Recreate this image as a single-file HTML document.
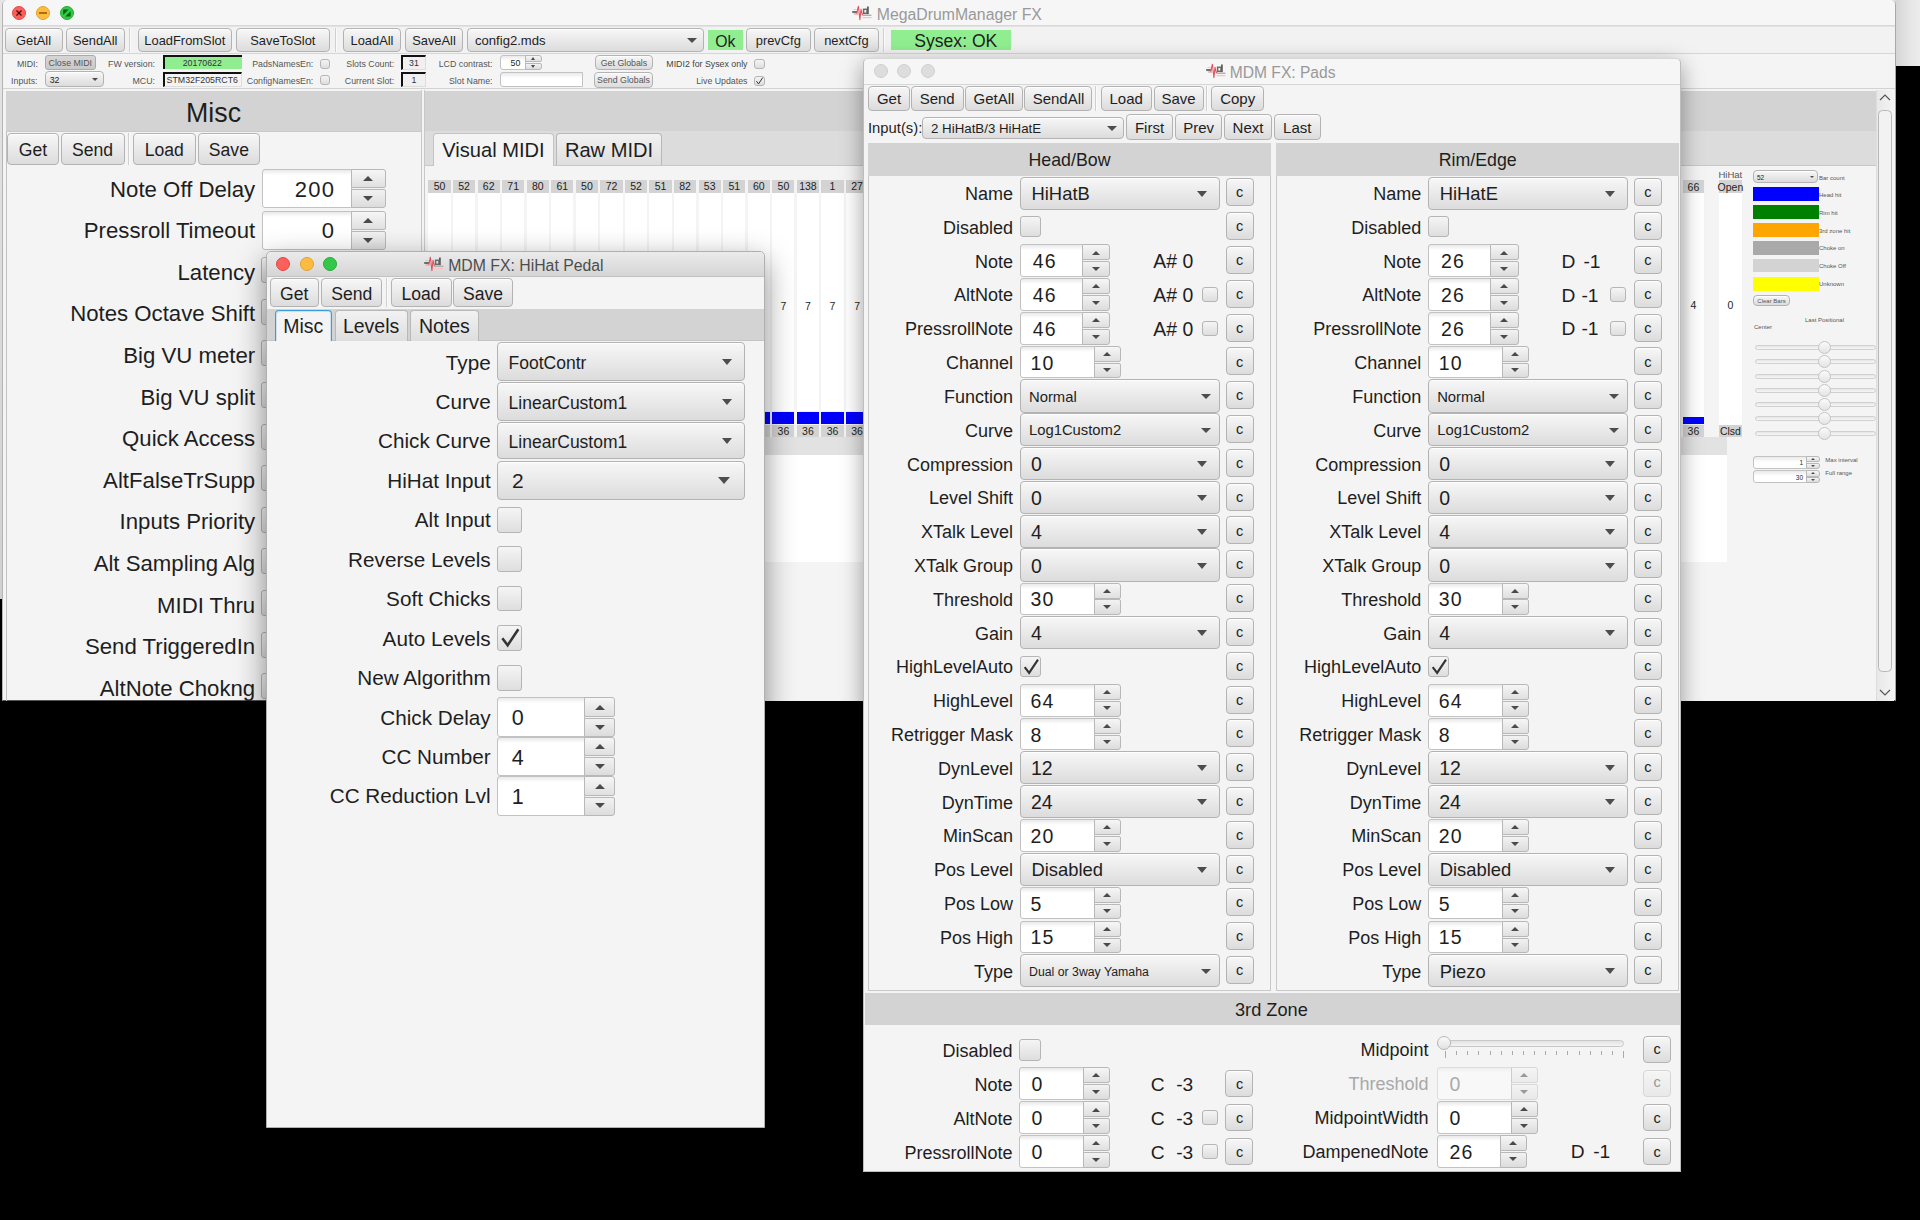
<!DOCTYPE html>
<html><head><meta charset="utf-8"><title>MegaDrumManager FX</title><style>*{box-sizing:border-box}
html,body{margin:0;padding:0}
body{width:1920px;height:1220px;background:#000;position:relative;overflow:hidden;font-family:"Liberation Sans",sans-serif;color:#1e1e1e}
body>div{position:absolute}
.t{white-space:nowrap;line-height:1}
.btn{border:1px solid #b3b3b3;border-radius:4px;background:linear-gradient(#f7f7f7,#dcdcdc);box-shadow:inset 0 1px 0 rgba(255,255,255,.85)}
.fld{border:1px solid #c2c2c2;border-radius:3px 0 0 3px;background:linear-gradient(#e9e9e9,#fff 5px)}
.sbu{border:1px solid #b8b8b8;border-radius:0 3px 2px 0;background:linear-gradient(#f6f6f6,#e0e0e0)}
.sbd{border:1px solid #b8b8b8;border-radius:0 2px 3px 0;background:linear-gradient(#f2f2f2,#dcdcdc)}
.chk{border:1px solid #b5b5b5;border-radius:3px;background:linear-gradient(#f5f5f5,#dedede)}
</style></head><body>
<div style="left:0.0px;top:0.0px;width:1920.0px;height:66.0px;background:#e9e9e9"></div>
<div style="left:1895.0px;top:0.0px;width:25.0px;height:66.0px;background:linear-gradient(90deg,#d4d4d4,#e6e6e6 60%,#ececec)"></div>
<div style="left:0.0px;top:0.0px;width:2.5px;height:599.0px;background:linear-gradient(#e6e6e6,#d0d0d0)"></div>
<div style="left:2.0px;top:0.0px;width:1894.0px;height:701.0px;background:#f4f4f4;border-radius:5px 5px 0 0;border-left:1px solid #b4b4b4;border-right:1px solid #a8a8a8;border-bottom:1px solid #555"></div>
<div style="left:3.0px;top:0.0px;width:1892.0px;height:26.0px;background:#f6f6f6;border-bottom:1px solid #d9d9d9;border-radius:5px 5px 0 0"></div>
<div style="left:12.0px;top:6.0px;width:14.0px;height:14.0px;border-radius:50%;background:#fc605c;border:0.8px solid #de4a46"></div>
<div style="left:36.0px;top:6.0px;width:14.0px;height:14.0px;border-radius:50%;background:#fdbc40;border:0.8px solid #dea236"></div>
<div style="left:60.0px;top:6.0px;width:14.0px;height:14.0px;border-radius:50%;background:#34c84a;border:0.8px solid #27aa35"></div>
<svg style="position:absolute;left:12px;top:6px" width="62" height="14" viewBox="0 0 62 14"><path d="M4.5 4.5 L9.5 9.5 M9.5 4.5 L4.5 9.5" stroke="#4d0000" stroke-width="1.3"/><path d="M27 7 L35 7" stroke="#995700" stroke-width="1.6"/><path d="M51.2 3.6 L56.6 3.6 L51.2 9 Z M58.6 5.2 L58.6 10.6 L53.2 10.6 Z" fill="#0b650d"/></svg>
<svg style="position:absolute;left:852.2px;top:4.8px" width="20.0" height="16.0" viewBox="0 0 20 16"><rect x="0" y="6.2" width="5.6" height="1.5" rx=".7" fill="#3a4a48"/><rect x="1.5" y="4.2" width="3" height=".6" fill="#bbb"/><rect x="1.8" y="8.4" width="4.5" height="1.2" fill="#e89a9a"/><path d="M4.6 8.6 L6.4 1.2 L7.9 14.6 L9 4.2 L10.3 9.8 L11 9" fill="none" stroke="#e0505a" stroke-width="1.05" stroke-linejoin="round"/><rect x="11.6" y="4.3" width="3.4" height="4" fill="none" stroke="#6a6a6a" stroke-width="1.5"/><rect x="15" y="1.5" width="1.8" height="7.6" fill="#5e5e5e"/><rect x="10.6" y="9.6" width="8.8" height="1.3" fill="#a8a8a8"/><rect x="10.6" y="12" width="8.8" height="1.2" fill="#f7c0c4"/></svg>
<div class="t" style="left:876.8px;top:7.0px;font-size:15.8px;color:#999999;">MegaDrumManager FX</div>
<div style="left:3.0px;top:26.0px;width:1892.0px;height:28.0px;background:#f2f2f2;border-bottom:1px solid #d6d6d6;border-top:1px solid #e2e2e2"></div>
<div class="btn" style="left:4.5px;top:28.0px;width:58.0px;height:24.0px;"></div>
<div class="t" style="left:-116.5px;width:300px;text-align:center;top:35.0px;font-size:12.9px;">GetAll</div>
<div class="btn" style="left:66.0px;top:28.0px;width:58.5px;height:24.0px;"></div>
<div class="t" style="left:-54.8px;width:300px;text-align:center;top:35.0px;font-size:12.9px;">SendAll</div>
<div style="left:129.0px;top:28px;width:2px;height:24px;border-left:1px solid #d0d0d0;border-right:1px solid #fafafa"></div>
<div class="btn" style="left:137.5px;top:28.0px;width:94.5px;height:24.0px;"></div>
<div class="t" style="left:34.8px;width:300px;text-align:center;top:35.0px;font-size:12.9px;">LoadFromSlot</div>
<div class="btn" style="left:235.5px;top:28.0px;width:94.5px;height:24.0px;"></div>
<div class="t" style="left:132.8px;width:300px;text-align:center;top:35.0px;font-size:12.9px;">SaveToSlot</div>
<div style="left:335.0px;top:28px;width:2px;height:24px;border-left:1px solid #d0d0d0;border-right:1px solid #fafafa"></div>
<div class="btn" style="left:343.0px;top:28.0px;width:58.0px;height:24.0px;"></div>
<div class="t" style="left:222.0px;width:300px;text-align:center;top:35.0px;font-size:12.9px;">LoadAll</div>
<div class="btn" style="left:405.0px;top:28.0px;width:58.0px;height:24.0px;"></div>
<div class="t" style="left:284.0px;width:300px;text-align:center;top:35.0px;font-size:12.9px;">SaveAll</div>
<div class="btn" style="left:467.0px;top:28.0px;width:237.0px;height:24.0px;"></div>
<div class="t" style="left:475.0px;top:34.0px;font-size:13.1px;">config2.mds</div>
<div style="left:687.0px;top:38.0px;width:0;height:0;border-left:5.0px solid transparent;border-right:5.0px solid transparent;border-top:5.0px solid #4d4d4d"></div>
<div style="left:707.5px;top:30.0px;width:35.5px;height:20.0px;background:#90ee90"></div>
<div class="t" style="left:695.3px;width:60px;text-align:center;top:34.0px;font-size:15.8px;">Ok</div>
<div class="btn" style="left:746.0px;top:28.0px;width:64.6px;height:24.0px;"></div>
<div class="t" style="left:628.3px;width:300px;text-align:center;top:35.0px;font-size:12.9px;">prevCfg</div>
<div class="btn" style="left:814.0px;top:28.0px;width:64.7px;height:24.0px;"></div>
<div class="t" style="left:696.4px;width:300px;text-align:center;top:35.0px;font-size:12.9px;">nextCfg</div>
<div style="left:883.0px;top:28px;width:2px;height:24px;border-left:1px solid #d0d0d0;border-right:1px solid #fafafa"></div>
<div style="left:891.0px;top:30.0px;width:119.6px;height:20.0px;background:#90ee90"></div>
<div class="t" style="left:855.8px;width:200px;text-align:center;top:33.0px;font-size:17.6px;">Sysex: OK</div>
<div style="left:3.0px;top:54.0px;width:1892.0px;height:35.0px;background:#f4f4f4;border-bottom:1px solid #d2d2d2"></div>
<div class="t" style="right:1882.0px;top:60.0px;font-size:8.8px;color:#555;">MIDI:</div>
<div style="left:44.7px;top:54.7px;width:51.3px;height:15.6px;border:1px solid #aaa;border-radius:3px;background:linear-gradient(#d6d6d6,#c9c9c9)"></div>
<div class="t" style="left:30.3px;width:80px;text-align:center;top:59.0px;font-size:8.8px;color:#555;">Close MIDI</div>
<div class="t" style="right:1882.5px;top:77.0px;font-size:8.8px;color:#555;">Inputs:</div>
<div class="btn" style="left:44.7px;top:71.0px;width:58.9px;height:16.2px;"></div>
<div class="t" style="left:49.7px;top:76.0px;font-size:8.8px;">32</div>
<div style="left:92.0px;top:77.8px;width:0;height:0;border-left:3.0px solid transparent;border-right:3.0px solid transparent;border-top:3.5px solid #4d4d4d"></div>
<div class="t" style="right:1765.0px;top:60.0px;font-size:8.8px;color:#555;">FW version:</div>
<div style="left:163.0px;top:55.4px;width:78.7px;height:13.6px;background:#90ee90;border-top:2px solid #111;border-left:2px solid #111"></div>
<div class="t" style="left:162.3px;width:80px;text-align:center;top:59.0px;font-size:8.8px;color:#333;">20170622</div>
<div class="t" style="right:1765.0px;top:77.0px;font-size:8.8px;color:#555;">MCU:</div>
<div style="left:163.0px;top:72.0px;width:78.7px;height:14.6px;background:#f4f4f4;border-top:2px solid #111;border-left:2px solid #111;border-bottom:1px solid #ddd;border-right:1px solid #ddd"></div>
<div class="t" style="left:162.3px;width:80px;text-align:center;top:76.0px;font-size:8.8px;color:#333;">STM32F205RCT6</div>
<div class="t" style="right:1606.7px;top:60.0px;font-size:8.8px;color:#555;">PadsNamesEn:</div>
<div class="chk" style="left:320.0px;top:59.0px;width:10.3px;height:9.7px;"></div>
<div class="t" style="right:1606.7px;top:77.0px;font-size:8.8px;color:#555;">ConfigNamesEn:</div>
<div class="chk" style="left:320.0px;top:75.3px;width:10.3px;height:10.0px;"></div>
<div class="t" style="right:1525.8px;top:60.0px;font-size:8.8px;color:#555;">Slots Count:</div>
<div style="left:401.3px;top:55.0px;width:24.5px;height:14.5px;background:#f0f0f0;border-top:2px solid #111;border-left:2px solid #111;border-bottom:1px solid #ddd;border-right:1px solid #ddd"></div>
<div class="t" style="left:399.0px;width:30px;text-align:center;top:59.0px;font-size:8.8px;color:#333;">31</div>
<div class="t" style="right:1525.8px;top:77.0px;font-size:8.8px;color:#555;">Current Slot:</div>
<div style="left:401.3px;top:72.0px;width:24.5px;height:14.7px;background:#f0f0f0;border-top:2px solid #111;border-left:2px solid #111;border-bottom:1px solid #ddd;border-right:1px solid #ddd"></div>
<div class="t" style="left:399.0px;width:30px;text-align:center;top:76.0px;font-size:8.8px;color:#333;">1</div>
<div class="t" style="right:1427.5px;top:60.0px;font-size:8.8px;color:#555;">LCD contrast:</div>
<div class="fld" style="left:499.5px;top:54.5px;width:26.8px;height:15.8px;"></div>
<div class="sbu" style="left:525.3px;top:54.5px;width:16.7px;height:7.7px;"></div>
<div class="sbd" style="left:525.3px;top:63.0px;width:16.7px;height:7.3px;"></div>
<div class="t" style="right:1399.7px;top:59.0px;font-size:8.8px;">50</div>
<div style="left:530.9px;top:57.2px;width:0;height:0;border-left:2.7px solid transparent;border-right:2.7px solid transparent;border-bottom:3.1px solid #4a4a4a"></div>
<div style="left:530.9px;top:65.1px;width:0;height:0;border-left:2.7px solid transparent;border-right:2.7px solid transparent;border-top:3.1px solid #4a4a4a"></div>
<div class="t" style="right:1427.5px;top:77.0px;font-size:8.8px;color:#555;">Slot Name:</div>
<div class="fld" style="left:499.5px;top:72.0px;width:83.5px;height:15.0px;"></div>
<div class="btn" style="left:594.7px;top:54.5px;width:58.6px;height:15.5px;"></div>
<div class="t" style="left:584.0px;width:80px;text-align:center;top:59.0px;font-size:8.8px;color:#555;">Get Globals</div>
<div class="btn" style="left:593.7px;top:71.7px;width:59.6px;height:16.1px;"></div>
<div class="t" style="left:583.5px;width:80px;text-align:center;top:76.0px;font-size:8.8px;color:#555;">Send Globals</div>
<div class="t" style="right:1172.5px;top:60.0px;font-size:8.8px;color:#444;">MIDI2 for Sysex only</div>
<div class="chk" style="left:754.0px;top:59.0px;width:10.7px;height:10.0px;"></div>
<div class="t" style="right:1172.5px;top:77.0px;font-size:8.8px;color:#555;">Live Updates</div>
<div class="chk" style="left:754.0px;top:75.5px;width:10.7px;height:10.0px;"></div>
<svg style="position:absolute;left:754.0px;top:75.5px" width="10.7" height="10.0" viewBox="0 0 24 24"><path d="M5 12.5 L10 19 L20 4" fill="none" stroke="#333" stroke-width="2.4" stroke-linejoin="miter"/></svg>
<div style="left:6.0px;top:91.0px;width:415.5px;height:40.0px;background:#d3d3d3"></div>
<div style="left:6.0px;top:131.0px;width:415.5px;height:570.0px;border-left:1px solid #c2c2c2;border-top:1px solid #cacaca"></div>
<div class="t" style="left:113.6px;width:200px;text-align:center;top:100.0px;font-size:26.8px;">Misc</div>
<div class="btn" style="left:7.0px;top:133.2px;width:51.8px;height:31.4px;"></div>
<div class="t" style="left:-117.1px;width:300px;text-align:center;top:142.0px;font-size:17.6px;">Get</div>
<div class="btn" style="left:60.5px;top:133.2px;width:64.2px;height:31.4px;"></div>
<div class="t" style="left:-57.4px;width:300px;text-align:center;top:142.0px;font-size:17.6px;">Send</div>
<div style="left:128.0px;top:133px;width:2px;height:32px;border-left:1px solid #d0d0d0;border-right:1px solid #fafafa"></div>
<div class="btn" style="left:133.0px;top:133.2px;width:62.7px;height:31.4px;"></div>
<div class="t" style="left:14.3px;width:300px;text-align:center;top:142.0px;font-size:17.6px;">Load</div>
<div class="btn" style="left:197.6px;top:133.2px;width:62.7px;height:31.4px;"></div>
<div class="t" style="left:78.9px;width:300px;text-align:center;top:142.0px;font-size:17.6px;">Save</div>
<div style="left:421px;top:90px;width:4px;height:611px;background:#f4f4f4;border-left:1px solid #c8c8c8;border-right:1px solid #c8c8c8"></div>
<div class="t" style="right:1664.8px;top:179.0px;font-size:22.2px;">Note Off Delay</div>
<div class="fld" style="left:262.0px;top:169.0px;width:90.3px;height:39.0px;"></div>
<div class="sbu" style="left:351.3px;top:169.0px;width:34.5px;height:19.3px;"></div>
<div class="sbd" style="left:351.3px;top:189.1px;width:34.5px;height:18.9px;"></div>
<div class="t" style="right:1584.7px;top:179.0px;font-size:22px;letter-spacing:1.32px;">200</div>
<div style="left:363.2px;top:176.4px;width:0;height:0;border-left:5.4px solid transparent;border-right:5.4px solid transparent;border-bottom:5.4px solid #4a4a4a"></div>
<div style="left:363.2px;top:195.9px;width:0;height:0;border-left:5.4px solid transparent;border-right:5.4px solid transparent;border-top:5.4px solid #4a4a4a"></div>
<div class="t" style="right:1664.8px;top:220.0px;font-size:22.2px;">Pressroll Timeout</div>
<div class="fld" style="left:262.0px;top:210.6px;width:90.3px;height:39.0px;"></div>
<div class="sbu" style="left:351.3px;top:210.6px;width:34.5px;height:19.3px;"></div>
<div class="sbd" style="left:351.3px;top:230.7px;width:34.5px;height:18.9px;"></div>
<div class="t" style="right:1584.7px;top:220.0px;font-size:22px;letter-spacing:1.32px;">0</div>
<div style="left:363.2px;top:218.0px;width:0;height:0;border-left:5.4px solid transparent;border-right:5.4px solid transparent;border-bottom:5.4px solid #4a4a4a"></div>
<div style="left:363.2px;top:237.5px;width:0;height:0;border-left:5.4px solid transparent;border-right:5.4px solid transparent;border-top:5.4px solid #4a4a4a"></div>
<div class="t" style="right:1664.8px;top:262.0px;font-size:22.2px;">Latency</div>
<div class="chk" style="left:261.3px;top:257.2px;width:25.7px;height:26.0px;"></div>
<div class="t" style="right:1664.8px;top:303.0px;font-size:22.2px;">Notes Octave Shift</div>
<div class="chk" style="left:261.3px;top:298.8px;width:25.7px;height:26.0px;"></div>
<div class="t" style="right:1664.8px;top:345.0px;font-size:22.2px;">Big VU meter</div>
<div class="chk" style="left:261.3px;top:340.4px;width:25.7px;height:26.0px;"></div>
<div class="t" style="right:1664.8px;top:387.0px;font-size:22.2px;">Big VU split</div>
<div class="chk" style="left:261.3px;top:382.0px;width:25.7px;height:26.0px;"></div>
<div class="t" style="right:1664.8px;top:428.0px;font-size:22.2px;">Quick Access</div>
<div class="chk" style="left:261.3px;top:423.6px;width:25.7px;height:26.0px;"></div>
<div class="t" style="right:1664.8px;top:470.0px;font-size:22.2px;">AltFalseTrSupp</div>
<div class="chk" style="left:261.3px;top:465.2px;width:25.7px;height:26.0px;"></div>
<div class="t" style="right:1664.8px;top:511.0px;font-size:22.2px;">Inputs Priority</div>
<div class="chk" style="left:261.3px;top:506.8px;width:25.7px;height:26.0px;"></div>
<div class="t" style="right:1664.8px;top:553.0px;font-size:22.2px;">Alt Sampling Alg</div>
<div class="chk" style="left:261.3px;top:548.4px;width:25.7px;height:26.0px;"></div>
<div class="t" style="right:1664.8px;top:595.0px;font-size:22.2px;">MIDI Thru</div>
<div class="chk" style="left:261.3px;top:590.0px;width:25.7px;height:26.0px;"></div>
<div class="t" style="right:1664.8px;top:636.0px;font-size:22.2px;">Send TriggeredIn</div>
<div class="chk" style="left:261.3px;top:631.6px;width:25.7px;height:26.0px;"></div>
<div class="t" style="right:1664.8px;top:678.0px;font-size:22.2px;">AltNote Chokng</div>
<div class="chk" style="left:261.3px;top:673.2px;width:25.7px;height:26.0px;"></div>
<div style="left:425.0px;top:91.0px;width:1451.0px;height:40.0px;background:#d3d3d3"></div>
<div style="left:425.0px;top:131.0px;width:1451.0px;height:35.0px;background:#dcdcdc"></div>
<div style="left:425.0px;top:165.0px;width:1451.0px;height:536.0px;background:#f4f4f4;border-top:1px solid #c8c8c8"></div>
<div style="left:432.5px;top:133.0px;width:121.5px;height:33.0px;background:#f4f4f4;border:1px solid #c4c4c4;border-bottom:none;border-radius:4px 4px 0 0"></div>
<div class="t" style="left:413.5px;width:160px;text-align:center;top:140.0px;font-size:20.1px;">Visual MIDI</div>
<div style="left:556.0px;top:133.0px;width:105.5px;height:32.0px;border-radius:4px 4px 0 0;border:1px solid #b8b8b8;border-bottom:none;background:linear-gradient(#f2f2f2,#dedede)"></div>
<div class="t" style="left:529.0px;width:160px;text-align:center;top:140.0px;font-size:20.1px;">Raw MIDI</div>
<div style="left:428.4px;top:180.4px;width:22.3px;height:12.4px;background:#d3d3d3"></div>
<div style="left:428.4px;top:192.8px;width:22.3px;height:218.7px;background:#fff"></div>
<div style="left:428.4px;top:411.5px;width:22.3px;height:12.8px;background:#0000ff"></div>
<div style="left:428.4px;top:424.5px;width:22.3px;height:12.5px;background:#d3d3d3"></div>
<div class="t" style="left:419.5px;width:40px;text-align:center;top:181.0px;font-size:10.5px;">50</div>
<div class="t" style="left:419.5px;width:40px;text-align:center;top:426.0px;font-size:10.5px;">36</div>
<div class="t" style="left:419.5px;width:40px;text-align:center;top:301.0px;font-size:10.5px;">7</div>
<div style="left:453.0px;top:180.4px;width:22.3px;height:12.4px;background:#d3d3d3"></div>
<div style="left:453.0px;top:192.8px;width:22.3px;height:218.7px;background:#fff"></div>
<div style="left:453.0px;top:411.5px;width:22.3px;height:12.8px;background:#0000ff"></div>
<div style="left:453.0px;top:424.5px;width:22.3px;height:12.5px;background:#d3d3d3"></div>
<div class="t" style="left:444.1px;width:40px;text-align:center;top:181.0px;font-size:10.5px;">52</div>
<div class="t" style="left:444.1px;width:40px;text-align:center;top:426.0px;font-size:10.5px;">36</div>
<div class="t" style="left:444.1px;width:40px;text-align:center;top:301.0px;font-size:10.5px;">7</div>
<div style="left:477.5px;top:180.4px;width:22.3px;height:12.4px;background:#d3d3d3"></div>
<div style="left:477.5px;top:192.8px;width:22.3px;height:218.7px;background:#fff"></div>
<div style="left:477.5px;top:411.5px;width:22.3px;height:12.8px;background:#0000ff"></div>
<div style="left:477.5px;top:424.5px;width:22.3px;height:12.5px;background:#d3d3d3"></div>
<div class="t" style="left:468.7px;width:40px;text-align:center;top:181.0px;font-size:10.5px;">62</div>
<div class="t" style="left:468.7px;width:40px;text-align:center;top:426.0px;font-size:10.5px;">36</div>
<div class="t" style="left:468.7px;width:40px;text-align:center;top:301.0px;font-size:10.5px;">7</div>
<div style="left:502.1px;top:180.4px;width:22.3px;height:12.4px;background:#d3d3d3"></div>
<div style="left:502.1px;top:192.8px;width:22.3px;height:218.7px;background:#fff"></div>
<div style="left:502.1px;top:411.5px;width:22.3px;height:12.8px;background:#0000ff"></div>
<div style="left:502.1px;top:424.5px;width:22.3px;height:12.5px;background:#d3d3d3"></div>
<div class="t" style="left:493.2px;width:40px;text-align:center;top:181.0px;font-size:10.5px;">71</div>
<div class="t" style="left:493.2px;width:40px;text-align:center;top:426.0px;font-size:10.5px;">36</div>
<div class="t" style="left:493.2px;width:40px;text-align:center;top:301.0px;font-size:10.5px;">7</div>
<div style="left:526.6px;top:180.4px;width:22.3px;height:12.4px;background:#d3d3d3"></div>
<div style="left:526.6px;top:192.8px;width:22.3px;height:218.7px;background:#fff"></div>
<div style="left:526.6px;top:411.5px;width:22.3px;height:12.8px;background:#0000ff"></div>
<div style="left:526.6px;top:424.5px;width:22.3px;height:12.5px;background:#d3d3d3"></div>
<div class="t" style="left:517.8px;width:40px;text-align:center;top:181.0px;font-size:10.5px;">80</div>
<div class="t" style="left:517.8px;width:40px;text-align:center;top:426.0px;font-size:10.5px;">36</div>
<div class="t" style="left:517.8px;width:40px;text-align:center;top:301.0px;font-size:10.5px;">7</div>
<div style="left:551.2px;top:180.4px;width:22.3px;height:12.4px;background:#d3d3d3"></div>
<div style="left:551.2px;top:192.8px;width:22.3px;height:218.7px;background:#fff"></div>
<div style="left:551.2px;top:411.5px;width:22.3px;height:12.8px;background:#0000ff"></div>
<div style="left:551.2px;top:424.5px;width:22.3px;height:12.5px;background:#d3d3d3"></div>
<div class="t" style="left:542.3px;width:40px;text-align:center;top:181.0px;font-size:10.5px;">61</div>
<div class="t" style="left:542.3px;width:40px;text-align:center;top:426.0px;font-size:10.5px;">36</div>
<div class="t" style="left:542.3px;width:40px;text-align:center;top:301.0px;font-size:10.5px;">7</div>
<div style="left:575.8px;top:180.4px;width:22.3px;height:12.4px;background:#d3d3d3"></div>
<div style="left:575.8px;top:192.8px;width:22.3px;height:218.7px;background:#fff"></div>
<div style="left:575.8px;top:411.5px;width:22.3px;height:12.8px;background:#0000ff"></div>
<div style="left:575.8px;top:424.5px;width:22.3px;height:12.5px;background:#d3d3d3"></div>
<div class="t" style="left:566.9px;width:40px;text-align:center;top:181.0px;font-size:10.5px;">50</div>
<div class="t" style="left:566.9px;width:40px;text-align:center;top:426.0px;font-size:10.5px;">36</div>
<div class="t" style="left:566.9px;width:40px;text-align:center;top:301.0px;font-size:10.5px;">7</div>
<div style="left:600.3px;top:180.4px;width:22.3px;height:12.4px;background:#d3d3d3"></div>
<div style="left:600.3px;top:192.8px;width:22.3px;height:218.7px;background:#fff"></div>
<div style="left:600.3px;top:411.5px;width:22.3px;height:12.8px;background:#0000ff"></div>
<div style="left:600.3px;top:424.5px;width:22.3px;height:12.5px;background:#d3d3d3"></div>
<div class="t" style="left:591.5px;width:40px;text-align:center;top:181.0px;font-size:10.5px;">72</div>
<div class="t" style="left:591.5px;width:40px;text-align:center;top:426.0px;font-size:10.5px;">36</div>
<div class="t" style="left:591.5px;width:40px;text-align:center;top:301.0px;font-size:10.5px;">7</div>
<div style="left:624.9px;top:180.4px;width:22.3px;height:12.4px;background:#d3d3d3"></div>
<div style="left:624.9px;top:192.8px;width:22.3px;height:218.7px;background:#fff"></div>
<div style="left:624.9px;top:411.5px;width:22.3px;height:12.8px;background:#0000ff"></div>
<div style="left:624.9px;top:424.5px;width:22.3px;height:12.5px;background:#d3d3d3"></div>
<div class="t" style="left:616.0px;width:40px;text-align:center;top:181.0px;font-size:10.5px;">52</div>
<div class="t" style="left:616.0px;width:40px;text-align:center;top:426.0px;font-size:10.5px;">36</div>
<div class="t" style="left:616.0px;width:40px;text-align:center;top:301.0px;font-size:10.5px;">7</div>
<div style="left:649.4px;top:180.4px;width:22.3px;height:12.4px;background:#d3d3d3"></div>
<div style="left:649.4px;top:192.8px;width:22.3px;height:218.7px;background:#fff"></div>
<div style="left:649.4px;top:411.5px;width:22.3px;height:12.8px;background:#0000ff"></div>
<div style="left:649.4px;top:424.5px;width:22.3px;height:12.5px;background:#d3d3d3"></div>
<div class="t" style="left:640.6px;width:40px;text-align:center;top:181.0px;font-size:10.5px;">51</div>
<div class="t" style="left:640.6px;width:40px;text-align:center;top:426.0px;font-size:10.5px;">36</div>
<div class="t" style="left:640.6px;width:40px;text-align:center;top:301.0px;font-size:10.5px;">7</div>
<div style="left:674.0px;top:180.4px;width:22.3px;height:12.4px;background:#d3d3d3"></div>
<div style="left:674.0px;top:192.8px;width:22.3px;height:218.7px;background:#fff"></div>
<div style="left:674.0px;top:411.5px;width:22.3px;height:12.8px;background:#0000ff"></div>
<div style="left:674.0px;top:424.5px;width:22.3px;height:12.5px;background:#d3d3d3"></div>
<div class="t" style="left:665.1px;width:40px;text-align:center;top:181.0px;font-size:10.5px;">82</div>
<div class="t" style="left:665.1px;width:40px;text-align:center;top:426.0px;font-size:10.5px;">36</div>
<div class="t" style="left:665.1px;width:40px;text-align:center;top:301.0px;font-size:10.5px;">7</div>
<div style="left:698.6px;top:180.4px;width:22.3px;height:12.4px;background:#d3d3d3"></div>
<div style="left:698.6px;top:192.8px;width:22.3px;height:218.7px;background:#fff"></div>
<div style="left:698.6px;top:411.5px;width:22.3px;height:12.8px;background:#0000ff"></div>
<div style="left:698.6px;top:424.5px;width:22.3px;height:12.5px;background:#d3d3d3"></div>
<div class="t" style="left:689.7px;width:40px;text-align:center;top:181.0px;font-size:10.5px;">53</div>
<div class="t" style="left:689.7px;width:40px;text-align:center;top:426.0px;font-size:10.5px;">36</div>
<div class="t" style="left:689.7px;width:40px;text-align:center;top:301.0px;font-size:10.5px;">7</div>
<div style="left:723.1px;top:180.4px;width:22.3px;height:12.4px;background:#d3d3d3"></div>
<div style="left:723.1px;top:192.8px;width:22.3px;height:218.7px;background:#fff"></div>
<div style="left:723.1px;top:411.5px;width:22.3px;height:12.8px;background:#0000ff"></div>
<div style="left:723.1px;top:424.5px;width:22.3px;height:12.5px;background:#d3d3d3"></div>
<div class="t" style="left:714.3px;width:40px;text-align:center;top:181.0px;font-size:10.5px;">51</div>
<div class="t" style="left:714.3px;width:40px;text-align:center;top:426.0px;font-size:10.5px;">36</div>
<div class="t" style="left:714.3px;width:40px;text-align:center;top:301.0px;font-size:10.5px;">7</div>
<div style="left:747.7px;top:180.4px;width:22.3px;height:12.4px;background:#d3d3d3"></div>
<div style="left:747.7px;top:192.8px;width:22.3px;height:218.7px;background:#fff"></div>
<div style="left:747.7px;top:411.5px;width:22.3px;height:12.8px;background:#0000ff"></div>
<div style="left:747.7px;top:424.5px;width:22.3px;height:12.5px;background:#d3d3d3"></div>
<div class="t" style="left:738.8px;width:40px;text-align:center;top:181.0px;font-size:10.5px;">60</div>
<div class="t" style="left:738.8px;width:40px;text-align:center;top:426.0px;font-size:10.5px;">36</div>
<div class="t" style="left:738.8px;width:40px;text-align:center;top:301.0px;font-size:10.5px;">7</div>
<div style="left:772.2px;top:180.4px;width:22.3px;height:12.4px;background:#d3d3d3"></div>
<div style="left:772.2px;top:192.8px;width:22.3px;height:218.7px;background:#fff"></div>
<div style="left:772.2px;top:411.5px;width:22.3px;height:12.8px;background:#0000ff"></div>
<div style="left:772.2px;top:424.5px;width:22.3px;height:12.5px;background:#d3d3d3"></div>
<div class="t" style="left:763.4px;width:40px;text-align:center;top:181.0px;font-size:10.5px;">50</div>
<div class="t" style="left:763.4px;width:40px;text-align:center;top:426.0px;font-size:10.5px;">36</div>
<div class="t" style="left:763.4px;width:40px;text-align:center;top:301.0px;font-size:10.5px;">7</div>
<div style="left:796.8px;top:180.4px;width:22.3px;height:12.4px;background:#d3d3d3"></div>
<div style="left:796.8px;top:192.8px;width:22.3px;height:218.7px;background:#fff"></div>
<div style="left:796.8px;top:411.5px;width:22.3px;height:12.8px;background:#0000ff"></div>
<div style="left:796.8px;top:424.5px;width:22.3px;height:12.5px;background:#d3d3d3"></div>
<div class="t" style="left:787.9px;width:40px;text-align:center;top:181.0px;font-size:10.5px;">138</div>
<div class="t" style="left:787.9px;width:40px;text-align:center;top:426.0px;font-size:10.5px;">36</div>
<div class="t" style="left:787.9px;width:40px;text-align:center;top:301.0px;font-size:10.5px;">7</div>
<div style="left:821.4px;top:180.4px;width:22.3px;height:12.4px;background:#d3d3d3"></div>
<div style="left:821.4px;top:192.8px;width:22.3px;height:218.7px;background:#fff"></div>
<div style="left:821.4px;top:411.5px;width:22.3px;height:12.8px;background:#0000ff"></div>
<div style="left:821.4px;top:424.5px;width:22.3px;height:12.5px;background:#d3d3d3"></div>
<div class="t" style="left:812.5px;width:40px;text-align:center;top:181.0px;font-size:10.5px;">1</div>
<div class="t" style="left:812.5px;width:40px;text-align:center;top:426.0px;font-size:10.5px;">36</div>
<div class="t" style="left:812.5px;width:40px;text-align:center;top:301.0px;font-size:10.5px;">7</div>
<div style="left:845.9px;top:180.4px;width:22.3px;height:12.4px;background:#d3d3d3"></div>
<div style="left:845.9px;top:192.8px;width:22.3px;height:218.7px;background:#fff"></div>
<div style="left:845.9px;top:411.5px;width:22.3px;height:12.8px;background:#0000ff"></div>
<div style="left:845.9px;top:424.5px;width:22.3px;height:12.5px;background:#d3d3d3"></div>
<div class="t" style="left:837.1px;width:40px;text-align:center;top:181.0px;font-size:10.5px;">27</div>
<div class="t" style="left:837.1px;width:40px;text-align:center;top:426.0px;font-size:10.5px;">36</div>
<div class="t" style="left:837.1px;width:40px;text-align:center;top:301.0px;font-size:10.5px;">7</div>
<div style="left:870.5px;top:180.4px;width:22.3px;height:12.4px;background:#d3d3d3"></div>
<div style="left:870.5px;top:192.8px;width:22.3px;height:218.7px;background:#fff"></div>
<div style="left:870.5px;top:411.5px;width:22.3px;height:12.8px;background:#0000ff"></div>
<div style="left:870.5px;top:424.5px;width:22.3px;height:12.5px;background:#d3d3d3"></div>
<div class="t" style="left:861.6px;width:40px;text-align:center;top:181.0px;font-size:10.5px;">0</div>
<div class="t" style="left:861.6px;width:40px;text-align:center;top:426.0px;font-size:10.5px;">36</div>
<div class="t" style="left:861.6px;width:40px;text-align:center;top:301.0px;font-size:10.5px;">7</div>
<div style="left:895.0px;top:180.4px;width:22.3px;height:12.4px;background:#d3d3d3"></div>
<div style="left:895.0px;top:192.8px;width:22.3px;height:218.7px;background:#fff"></div>
<div style="left:895.0px;top:411.5px;width:22.3px;height:12.8px;background:#0000ff"></div>
<div style="left:895.0px;top:424.5px;width:22.3px;height:12.5px;background:#d3d3d3"></div>
<div class="t" style="left:886.2px;width:40px;text-align:center;top:181.0px;font-size:10.5px;">0</div>
<div class="t" style="left:886.2px;width:40px;text-align:center;top:426.0px;font-size:10.5px;">36</div>
<div class="t" style="left:886.2px;width:40px;text-align:center;top:301.0px;font-size:10.5px;">7</div>
<div style="left:919.6px;top:180.4px;width:22.3px;height:12.4px;background:#d3d3d3"></div>
<div style="left:919.6px;top:192.8px;width:22.3px;height:218.7px;background:#fff"></div>
<div style="left:919.6px;top:411.5px;width:22.3px;height:12.8px;background:#0000ff"></div>
<div style="left:919.6px;top:424.5px;width:22.3px;height:12.5px;background:#d3d3d3"></div>
<div class="t" style="left:910.7px;width:40px;text-align:center;top:181.0px;font-size:10.5px;">0</div>
<div class="t" style="left:910.7px;width:40px;text-align:center;top:426.0px;font-size:10.5px;">36</div>
<div class="t" style="left:910.7px;width:40px;text-align:center;top:301.0px;font-size:10.5px;">7</div>
<div style="left:944.2px;top:180.4px;width:22.3px;height:12.4px;background:#d3d3d3"></div>
<div style="left:944.2px;top:192.8px;width:22.3px;height:218.7px;background:#fff"></div>
<div style="left:944.2px;top:411.5px;width:22.3px;height:12.8px;background:#0000ff"></div>
<div style="left:944.2px;top:424.5px;width:22.3px;height:12.5px;background:#d3d3d3"></div>
<div class="t" style="left:935.3px;width:40px;text-align:center;top:181.0px;font-size:10.5px;">0</div>
<div class="t" style="left:935.3px;width:40px;text-align:center;top:426.0px;font-size:10.5px;">36</div>
<div class="t" style="left:935.3px;width:40px;text-align:center;top:301.0px;font-size:10.5px;">7</div>
<div style="left:968.7px;top:180.4px;width:22.3px;height:12.4px;background:#d3d3d3"></div>
<div style="left:968.7px;top:192.8px;width:22.3px;height:218.7px;background:#fff"></div>
<div style="left:968.7px;top:411.5px;width:22.3px;height:12.8px;background:#0000ff"></div>
<div style="left:968.7px;top:424.5px;width:22.3px;height:12.5px;background:#d3d3d3"></div>
<div class="t" style="left:959.9px;width:40px;text-align:center;top:181.0px;font-size:10.5px;">0</div>
<div class="t" style="left:959.9px;width:40px;text-align:center;top:426.0px;font-size:10.5px;">36</div>
<div class="t" style="left:959.9px;width:40px;text-align:center;top:301.0px;font-size:10.5px;">7</div>
<div style="left:993.3px;top:180.4px;width:22.3px;height:12.4px;background:#d3d3d3"></div>
<div style="left:993.3px;top:192.8px;width:22.3px;height:218.7px;background:#fff"></div>
<div style="left:993.3px;top:411.5px;width:22.3px;height:12.8px;background:#0000ff"></div>
<div style="left:993.3px;top:424.5px;width:22.3px;height:12.5px;background:#d3d3d3"></div>
<div class="t" style="left:984.4px;width:40px;text-align:center;top:181.0px;font-size:10.5px;">0</div>
<div class="t" style="left:984.4px;width:40px;text-align:center;top:426.0px;font-size:10.5px;">36</div>
<div class="t" style="left:984.4px;width:40px;text-align:center;top:301.0px;font-size:10.5px;">7</div>
<div style="left:1017.8px;top:180.4px;width:22.3px;height:12.4px;background:#d3d3d3"></div>
<div style="left:1017.8px;top:192.8px;width:22.3px;height:218.7px;background:#fff"></div>
<div style="left:1017.8px;top:411.5px;width:22.3px;height:12.8px;background:#0000ff"></div>
<div style="left:1017.8px;top:424.5px;width:22.3px;height:12.5px;background:#d3d3d3"></div>
<div class="t" style="left:1009.0px;width:40px;text-align:center;top:181.0px;font-size:10.5px;">0</div>
<div class="t" style="left:1009.0px;width:40px;text-align:center;top:426.0px;font-size:10.5px;">36</div>
<div class="t" style="left:1009.0px;width:40px;text-align:center;top:301.0px;font-size:10.5px;">7</div>
<div style="left:1042.4px;top:180.4px;width:22.3px;height:12.4px;background:#d3d3d3"></div>
<div style="left:1042.4px;top:192.8px;width:22.3px;height:218.7px;background:#fff"></div>
<div style="left:1042.4px;top:411.5px;width:22.3px;height:12.8px;background:#0000ff"></div>
<div style="left:1042.4px;top:424.5px;width:22.3px;height:12.5px;background:#d3d3d3"></div>
<div class="t" style="left:1033.6px;width:40px;text-align:center;top:181.0px;font-size:10.5px;">0</div>
<div class="t" style="left:1033.6px;width:40px;text-align:center;top:426.0px;font-size:10.5px;">36</div>
<div class="t" style="left:1033.6px;width:40px;text-align:center;top:301.0px;font-size:10.5px;">7</div>
<div style="left:1067.0px;top:180.4px;width:22.3px;height:12.4px;background:#d3d3d3"></div>
<div style="left:1067.0px;top:192.8px;width:22.3px;height:218.7px;background:#fff"></div>
<div style="left:1067.0px;top:411.5px;width:22.3px;height:12.8px;background:#0000ff"></div>
<div style="left:1067.0px;top:424.5px;width:22.3px;height:12.5px;background:#d3d3d3"></div>
<div class="t" style="left:1058.1px;width:40px;text-align:center;top:181.0px;font-size:10.5px;">0</div>
<div class="t" style="left:1058.1px;width:40px;text-align:center;top:426.0px;font-size:10.5px;">36</div>
<div class="t" style="left:1058.1px;width:40px;text-align:center;top:301.0px;font-size:10.5px;">7</div>
<div style="left:1091.5px;top:180.4px;width:22.3px;height:12.4px;background:#d3d3d3"></div>
<div style="left:1091.5px;top:192.8px;width:22.3px;height:218.7px;background:#fff"></div>
<div style="left:1091.5px;top:411.5px;width:22.3px;height:12.8px;background:#0000ff"></div>
<div style="left:1091.5px;top:424.5px;width:22.3px;height:12.5px;background:#d3d3d3"></div>
<div class="t" style="left:1082.7px;width:40px;text-align:center;top:181.0px;font-size:10.5px;">0</div>
<div class="t" style="left:1082.7px;width:40px;text-align:center;top:426.0px;font-size:10.5px;">36</div>
<div class="t" style="left:1082.7px;width:40px;text-align:center;top:301.0px;font-size:10.5px;">7</div>
<div style="left:1116.1px;top:180.4px;width:22.3px;height:12.4px;background:#d3d3d3"></div>
<div style="left:1116.1px;top:192.8px;width:22.3px;height:218.7px;background:#fff"></div>
<div style="left:1116.1px;top:411.5px;width:22.3px;height:12.8px;background:#0000ff"></div>
<div style="left:1116.1px;top:424.5px;width:22.3px;height:12.5px;background:#d3d3d3"></div>
<div class="t" style="left:1107.2px;width:40px;text-align:center;top:181.0px;font-size:10.5px;">0</div>
<div class="t" style="left:1107.2px;width:40px;text-align:center;top:426.0px;font-size:10.5px;">36</div>
<div class="t" style="left:1107.2px;width:40px;text-align:center;top:301.0px;font-size:10.5px;">7</div>
<div style="left:1140.6px;top:180.4px;width:22.3px;height:12.4px;background:#d3d3d3"></div>
<div style="left:1140.6px;top:192.8px;width:22.3px;height:218.7px;background:#fff"></div>
<div style="left:1140.6px;top:411.5px;width:22.3px;height:12.8px;background:#0000ff"></div>
<div style="left:1140.6px;top:424.5px;width:22.3px;height:12.5px;background:#d3d3d3"></div>
<div class="t" style="left:1131.8px;width:40px;text-align:center;top:181.0px;font-size:10.5px;">0</div>
<div class="t" style="left:1131.8px;width:40px;text-align:center;top:426.0px;font-size:10.5px;">36</div>
<div class="t" style="left:1131.8px;width:40px;text-align:center;top:301.0px;font-size:10.5px;">7</div>
<div style="left:1165.2px;top:180.4px;width:22.3px;height:12.4px;background:#d3d3d3"></div>
<div style="left:1165.2px;top:192.8px;width:22.3px;height:218.7px;background:#fff"></div>
<div style="left:1165.2px;top:411.5px;width:22.3px;height:12.8px;background:#0000ff"></div>
<div style="left:1165.2px;top:424.5px;width:22.3px;height:12.5px;background:#d3d3d3"></div>
<div class="t" style="left:1156.3px;width:40px;text-align:center;top:181.0px;font-size:10.5px;">0</div>
<div class="t" style="left:1156.3px;width:40px;text-align:center;top:426.0px;font-size:10.5px;">36</div>
<div class="t" style="left:1156.3px;width:40px;text-align:center;top:301.0px;font-size:10.5px;">7</div>
<div style="left:1189.8px;top:180.4px;width:22.3px;height:12.4px;background:#d3d3d3"></div>
<div style="left:1189.8px;top:192.8px;width:22.3px;height:218.7px;background:#fff"></div>
<div style="left:1189.8px;top:411.5px;width:22.3px;height:12.8px;background:#0000ff"></div>
<div style="left:1189.8px;top:424.5px;width:22.3px;height:12.5px;background:#d3d3d3"></div>
<div class="t" style="left:1180.9px;width:40px;text-align:center;top:181.0px;font-size:10.5px;">0</div>
<div class="t" style="left:1180.9px;width:40px;text-align:center;top:426.0px;font-size:10.5px;">36</div>
<div class="t" style="left:1180.9px;width:40px;text-align:center;top:301.0px;font-size:10.5px;">7</div>
<div style="left:1214.3px;top:180.4px;width:22.3px;height:12.4px;background:#d3d3d3"></div>
<div style="left:1214.3px;top:192.8px;width:22.3px;height:218.7px;background:#fff"></div>
<div style="left:1214.3px;top:411.5px;width:22.3px;height:12.8px;background:#0000ff"></div>
<div style="left:1214.3px;top:424.5px;width:22.3px;height:12.5px;background:#d3d3d3"></div>
<div class="t" style="left:1205.5px;width:40px;text-align:center;top:181.0px;font-size:10.5px;">0</div>
<div class="t" style="left:1205.5px;width:40px;text-align:center;top:426.0px;font-size:10.5px;">36</div>
<div class="t" style="left:1205.5px;width:40px;text-align:center;top:301.0px;font-size:10.5px;">7</div>
<div style="left:1238.9px;top:180.4px;width:22.3px;height:12.4px;background:#d3d3d3"></div>
<div style="left:1238.9px;top:192.8px;width:22.3px;height:218.7px;background:#fff"></div>
<div style="left:1238.9px;top:411.5px;width:22.3px;height:12.8px;background:#0000ff"></div>
<div style="left:1238.9px;top:424.5px;width:22.3px;height:12.5px;background:#d3d3d3"></div>
<div class="t" style="left:1230.0px;width:40px;text-align:center;top:181.0px;font-size:10.5px;">0</div>
<div class="t" style="left:1230.0px;width:40px;text-align:center;top:426.0px;font-size:10.5px;">36</div>
<div class="t" style="left:1230.0px;width:40px;text-align:center;top:301.0px;font-size:10.5px;">7</div>
<div style="left:1263.4px;top:180.4px;width:22.3px;height:12.4px;background:#d3d3d3"></div>
<div style="left:1263.4px;top:192.8px;width:22.3px;height:218.7px;background:#fff"></div>
<div style="left:1263.4px;top:411.5px;width:22.3px;height:12.8px;background:#0000ff"></div>
<div style="left:1263.4px;top:424.5px;width:22.3px;height:12.5px;background:#d3d3d3"></div>
<div class="t" style="left:1254.6px;width:40px;text-align:center;top:181.0px;font-size:10.5px;">0</div>
<div class="t" style="left:1254.6px;width:40px;text-align:center;top:426.0px;font-size:10.5px;">36</div>
<div class="t" style="left:1254.6px;width:40px;text-align:center;top:301.0px;font-size:10.5px;">7</div>
<div style="left:1288.0px;top:180.4px;width:22.3px;height:12.4px;background:#d3d3d3"></div>
<div style="left:1288.0px;top:192.8px;width:22.3px;height:218.7px;background:#fff"></div>
<div style="left:1288.0px;top:411.5px;width:22.3px;height:12.8px;background:#0000ff"></div>
<div style="left:1288.0px;top:424.5px;width:22.3px;height:12.5px;background:#d3d3d3"></div>
<div class="t" style="left:1279.2px;width:40px;text-align:center;top:181.0px;font-size:10.5px;">0</div>
<div class="t" style="left:1279.2px;width:40px;text-align:center;top:426.0px;font-size:10.5px;">36</div>
<div class="t" style="left:1279.2px;width:40px;text-align:center;top:301.0px;font-size:10.5px;">7</div>
<div style="left:1312.6px;top:180.4px;width:22.3px;height:12.4px;background:#d3d3d3"></div>
<div style="left:1312.6px;top:192.8px;width:22.3px;height:218.7px;background:#fff"></div>
<div style="left:1312.6px;top:411.5px;width:22.3px;height:12.8px;background:#0000ff"></div>
<div style="left:1312.6px;top:424.5px;width:22.3px;height:12.5px;background:#d3d3d3"></div>
<div class="t" style="left:1303.7px;width:40px;text-align:center;top:181.0px;font-size:10.5px;">0</div>
<div class="t" style="left:1303.7px;width:40px;text-align:center;top:426.0px;font-size:10.5px;">36</div>
<div class="t" style="left:1303.7px;width:40px;text-align:center;top:301.0px;font-size:10.5px;">7</div>
<div style="left:1337.1px;top:180.4px;width:22.3px;height:12.4px;background:#d3d3d3"></div>
<div style="left:1337.1px;top:192.8px;width:22.3px;height:218.7px;background:#fff"></div>
<div style="left:1337.1px;top:411.5px;width:22.3px;height:12.8px;background:#0000ff"></div>
<div style="left:1337.1px;top:424.5px;width:22.3px;height:12.5px;background:#d3d3d3"></div>
<div class="t" style="left:1328.3px;width:40px;text-align:center;top:181.0px;font-size:10.5px;">0</div>
<div class="t" style="left:1328.3px;width:40px;text-align:center;top:426.0px;font-size:10.5px;">36</div>
<div class="t" style="left:1328.3px;width:40px;text-align:center;top:301.0px;font-size:10.5px;">7</div>
<div style="left:1361.7px;top:180.4px;width:22.3px;height:12.4px;background:#d3d3d3"></div>
<div style="left:1361.7px;top:192.8px;width:22.3px;height:218.7px;background:#fff"></div>
<div style="left:1361.7px;top:411.5px;width:22.3px;height:12.8px;background:#0000ff"></div>
<div style="left:1361.7px;top:424.5px;width:22.3px;height:12.5px;background:#d3d3d3"></div>
<div class="t" style="left:1352.8px;width:40px;text-align:center;top:181.0px;font-size:10.5px;">0</div>
<div class="t" style="left:1352.8px;width:40px;text-align:center;top:426.0px;font-size:10.5px;">36</div>
<div class="t" style="left:1352.8px;width:40px;text-align:center;top:301.0px;font-size:10.5px;">7</div>
<div style="left:1386.2px;top:180.4px;width:22.3px;height:12.4px;background:#d3d3d3"></div>
<div style="left:1386.2px;top:192.8px;width:22.3px;height:218.7px;background:#fff"></div>
<div style="left:1386.2px;top:411.5px;width:22.3px;height:12.8px;background:#0000ff"></div>
<div style="left:1386.2px;top:424.5px;width:22.3px;height:12.5px;background:#d3d3d3"></div>
<div class="t" style="left:1377.4px;width:40px;text-align:center;top:181.0px;font-size:10.5px;">0</div>
<div class="t" style="left:1377.4px;width:40px;text-align:center;top:426.0px;font-size:10.5px;">36</div>
<div class="t" style="left:1377.4px;width:40px;text-align:center;top:301.0px;font-size:10.5px;">7</div>
<div style="left:1410.8px;top:180.4px;width:22.3px;height:12.4px;background:#d3d3d3"></div>
<div style="left:1410.8px;top:192.8px;width:22.3px;height:218.7px;background:#fff"></div>
<div style="left:1410.8px;top:411.5px;width:22.3px;height:12.8px;background:#0000ff"></div>
<div style="left:1410.8px;top:424.5px;width:22.3px;height:12.5px;background:#d3d3d3"></div>
<div class="t" style="left:1402.0px;width:40px;text-align:center;top:181.0px;font-size:10.5px;">0</div>
<div class="t" style="left:1402.0px;width:40px;text-align:center;top:426.0px;font-size:10.5px;">36</div>
<div class="t" style="left:1402.0px;width:40px;text-align:center;top:301.0px;font-size:10.5px;">7</div>
<div style="left:1435.4px;top:180.4px;width:22.3px;height:12.4px;background:#d3d3d3"></div>
<div style="left:1435.4px;top:192.8px;width:22.3px;height:218.7px;background:#fff"></div>
<div style="left:1435.4px;top:411.5px;width:22.3px;height:12.8px;background:#0000ff"></div>
<div style="left:1435.4px;top:424.5px;width:22.3px;height:12.5px;background:#d3d3d3"></div>
<div class="t" style="left:1426.5px;width:40px;text-align:center;top:181.0px;font-size:10.5px;">0</div>
<div class="t" style="left:1426.5px;width:40px;text-align:center;top:426.0px;font-size:10.5px;">36</div>
<div class="t" style="left:1426.5px;width:40px;text-align:center;top:301.0px;font-size:10.5px;">7</div>
<div style="left:1459.9px;top:180.4px;width:22.3px;height:12.4px;background:#d3d3d3"></div>
<div style="left:1459.9px;top:192.8px;width:22.3px;height:218.7px;background:#fff"></div>
<div style="left:1459.9px;top:411.5px;width:22.3px;height:12.8px;background:#0000ff"></div>
<div style="left:1459.9px;top:424.5px;width:22.3px;height:12.5px;background:#d3d3d3"></div>
<div class="t" style="left:1451.1px;width:40px;text-align:center;top:181.0px;font-size:10.5px;">0</div>
<div class="t" style="left:1451.1px;width:40px;text-align:center;top:426.0px;font-size:10.5px;">36</div>
<div class="t" style="left:1451.1px;width:40px;text-align:center;top:301.0px;font-size:10.5px;">7</div>
<div style="left:1484.5px;top:180.4px;width:22.3px;height:12.4px;background:#d3d3d3"></div>
<div style="left:1484.5px;top:192.8px;width:22.3px;height:218.7px;background:#fff"></div>
<div style="left:1484.5px;top:411.5px;width:22.3px;height:12.8px;background:#0000ff"></div>
<div style="left:1484.5px;top:424.5px;width:22.3px;height:12.5px;background:#d3d3d3"></div>
<div class="t" style="left:1475.6px;width:40px;text-align:center;top:181.0px;font-size:10.5px;">0</div>
<div class="t" style="left:1475.6px;width:40px;text-align:center;top:426.0px;font-size:10.5px;">36</div>
<div class="t" style="left:1475.6px;width:40px;text-align:center;top:301.0px;font-size:10.5px;">7</div>
<div style="left:1509.0px;top:180.4px;width:22.3px;height:12.4px;background:#d3d3d3"></div>
<div style="left:1509.0px;top:192.8px;width:22.3px;height:218.7px;background:#fff"></div>
<div style="left:1509.0px;top:411.5px;width:22.3px;height:12.8px;background:#0000ff"></div>
<div style="left:1509.0px;top:424.5px;width:22.3px;height:12.5px;background:#d3d3d3"></div>
<div class="t" style="left:1500.2px;width:40px;text-align:center;top:181.0px;font-size:10.5px;">0</div>
<div class="t" style="left:1500.2px;width:40px;text-align:center;top:426.0px;font-size:10.5px;">36</div>
<div class="t" style="left:1500.2px;width:40px;text-align:center;top:301.0px;font-size:10.5px;">7</div>
<div style="left:1533.6px;top:180.4px;width:22.3px;height:12.4px;background:#d3d3d3"></div>
<div style="left:1533.6px;top:192.8px;width:22.3px;height:218.7px;background:#fff"></div>
<div style="left:1533.6px;top:411.5px;width:22.3px;height:12.8px;background:#0000ff"></div>
<div style="left:1533.6px;top:424.5px;width:22.3px;height:12.5px;background:#d3d3d3"></div>
<div class="t" style="left:1524.8px;width:40px;text-align:center;top:181.0px;font-size:10.5px;">0</div>
<div class="t" style="left:1524.8px;width:40px;text-align:center;top:426.0px;font-size:10.5px;">36</div>
<div class="t" style="left:1524.8px;width:40px;text-align:center;top:301.0px;font-size:10.5px;">7</div>
<div style="left:1558.2px;top:180.4px;width:22.3px;height:12.4px;background:#d3d3d3"></div>
<div style="left:1558.2px;top:192.8px;width:22.3px;height:218.7px;background:#fff"></div>
<div style="left:1558.2px;top:411.5px;width:22.3px;height:12.8px;background:#0000ff"></div>
<div style="left:1558.2px;top:424.5px;width:22.3px;height:12.5px;background:#d3d3d3"></div>
<div class="t" style="left:1549.3px;width:40px;text-align:center;top:181.0px;font-size:10.5px;">0</div>
<div class="t" style="left:1549.3px;width:40px;text-align:center;top:426.0px;font-size:10.5px;">36</div>
<div class="t" style="left:1549.3px;width:40px;text-align:center;top:301.0px;font-size:10.5px;">7</div>
<div style="left:1582.7px;top:180.4px;width:22.3px;height:12.4px;background:#d3d3d3"></div>
<div style="left:1582.7px;top:192.8px;width:22.3px;height:218.7px;background:#fff"></div>
<div style="left:1582.7px;top:411.5px;width:22.3px;height:12.8px;background:#0000ff"></div>
<div style="left:1582.7px;top:424.5px;width:22.3px;height:12.5px;background:#d3d3d3"></div>
<div class="t" style="left:1573.9px;width:40px;text-align:center;top:181.0px;font-size:10.5px;">0</div>
<div class="t" style="left:1573.9px;width:40px;text-align:center;top:426.0px;font-size:10.5px;">36</div>
<div class="t" style="left:1573.9px;width:40px;text-align:center;top:301.0px;font-size:10.5px;">7</div>
<div style="left:1607.3px;top:180.4px;width:22.3px;height:12.4px;background:#d3d3d3"></div>
<div style="left:1607.3px;top:192.8px;width:22.3px;height:218.7px;background:#fff"></div>
<div style="left:1607.3px;top:411.5px;width:22.3px;height:12.8px;background:#0000ff"></div>
<div style="left:1607.3px;top:424.5px;width:22.3px;height:12.5px;background:#d3d3d3"></div>
<div class="t" style="left:1598.4px;width:40px;text-align:center;top:181.0px;font-size:10.5px;">0</div>
<div class="t" style="left:1598.4px;width:40px;text-align:center;top:426.0px;font-size:10.5px;">36</div>
<div class="t" style="left:1598.4px;width:40px;text-align:center;top:301.0px;font-size:10.5px;">7</div>
<div style="left:1631.8px;top:180.4px;width:22.3px;height:12.4px;background:#d3d3d3"></div>
<div style="left:1631.8px;top:192.8px;width:22.3px;height:218.7px;background:#fff"></div>
<div style="left:1631.8px;top:411.5px;width:22.3px;height:12.8px;background:#0000ff"></div>
<div style="left:1631.8px;top:424.5px;width:22.3px;height:12.5px;background:#d3d3d3"></div>
<div class="t" style="left:1623.0px;width:40px;text-align:center;top:181.0px;font-size:10.5px;">0</div>
<div class="t" style="left:1623.0px;width:40px;text-align:center;top:426.0px;font-size:10.5px;">36</div>
<div class="t" style="left:1623.0px;width:40px;text-align:center;top:301.0px;font-size:10.5px;">7</div>
<div style="left:1656.4px;top:180.4px;width:22.3px;height:12.4px;background:#d3d3d3"></div>
<div style="left:1656.4px;top:192.8px;width:22.3px;height:218.7px;background:#fff"></div>
<div style="left:1656.4px;top:411.5px;width:22.3px;height:12.8px;background:#0000ff"></div>
<div style="left:1656.4px;top:424.5px;width:22.3px;height:12.5px;background:#d3d3d3"></div>
<div class="t" style="left:1647.6px;width:40px;text-align:center;top:181.0px;font-size:10.5px;">0</div>
<div class="t" style="left:1647.6px;width:40px;text-align:center;top:426.0px;font-size:10.5px;">36</div>
<div class="t" style="left:1647.6px;width:40px;text-align:center;top:301.0px;font-size:10.5px;">7</div>
<div style="left:425.0px;top:437.0px;width:1302.0px;height:18.0px;background:#e2e2e2"></div>
<div style="left:425.0px;top:455.0px;width:1302.0px;height:107.0px;background:#fff"></div>
<div style="left:425.0px;top:562.0px;width:1451.0px;height:139.0px;background:#f4f4f4"></div>
<div style="left:1682.5px;top:180.0px;width:21.8px;height:12.9px;background:#d3d3d3"></div>
<div class="t" style="left:1673.4px;width:40px;text-align:center;top:182.0px;font-size:10.5px;">66</div>
<div style="left:1682.5px;top:192.9px;width:21.8px;height:224.1px;background:linear-gradient(90deg,#f0f0f0,#fff 40%,#fff)"></div>
<div style="left:1682.5px;top:417.0px;width:21.8px;height:7.3px;background:#0000ff"></div>
<div style="left:1682.5px;top:424.5px;width:21.8px;height:12.9px;background:#d3d3d3"></div>
<div class="t" style="left:1673.4px;width:40px;text-align:center;top:426.0px;font-size:10.5px;">36</div>
<div class="t" style="left:1673.4px;width:40px;text-align:center;top:300.0px;font-size:10.5px;">4</div>
<div class="t" style="left:1710.4px;width:40px;text-align:center;top:170.0px;font-size:9.5px;color:#555;">HiHat</div>
<div style="left:1718.8px;top:180.0px;width:23.2px;height:13.0px;background:#d3d3d3"></div>
<div class="t" style="left:1710.4px;width:40px;text-align:center;top:182.0px;font-size:10.5px;">Open</div>
<div style="left:1718.8px;top:193.0px;width:23.2px;height:231.8px;background:#fff"></div>
<div style="left:1718.8px;top:424.8px;width:23.2px;height:12.6px;background:#d3d3d3"></div>
<div class="t" style="left:1710.4px;width:40px;text-align:center;top:426.0px;font-size:10.5px;">Clsd</div>
<div class="t" style="left:1710.4px;width:40px;text-align:center;top:300.0px;font-size:10.5px;">0</div>
<div class="btn" style="left:1753.0px;top:170.3px;width:65.3px;height:12.6px;"></div>
<div class="t" style="left:1757.0px;top:175.0px;font-size:6.5px;">52</div>
<div style="left:1810.0px;top:175.9px;width:0;height:0;border-left:2.0px solid transparent;border-right:2.0px solid transparent;border-top:2.5px solid #4d4d4d"></div>
<div class="t" style="left:1819.0px;top:175.0px;font-size:6px;color:#555;">Bar count</div>
<div style="left:1753.0px;top:187.3px;width:66.0px;height:13.8px;background:#0000ff"></div>
<div class="t" style="left:1819.0px;top:192.0px;font-size:6px;color:#555;">Head hit</div>
<div style="left:1753.0px;top:205.2px;width:66.0px;height:13.8px;background:#008000"></div>
<div class="t" style="left:1819.0px;top:210.0px;font-size:6px;color:#555;">Rim hit</div>
<div style="left:1753.0px;top:223.3px;width:66.0px;height:13.8px;background:#ffa500"></div>
<div class="t" style="left:1819.0px;top:228.0px;font-size:6px;color:#555;">3rd zone hit</div>
<div style="left:1753.0px;top:240.8px;width:66.0px;height:13.8px;background:#a9a9a9"></div>
<div class="t" style="left:1819.0px;top:245.0px;font-size:6px;color:#555;">Choke on</div>
<div style="left:1753.0px;top:258.7px;width:66.0px;height:13.8px;background:#d3d3d3"></div>
<div class="t" style="left:1819.0px;top:263.0px;font-size:6px;color:#555;">Choke Off</div>
<div style="left:1753.0px;top:277.0px;width:66.0px;height:13.8px;background:#ffff00"></div>
<div class="t" style="left:1819.0px;top:281.0px;font-size:6px;color:#555;">Unknown</div>
<div class="btn" style="left:1753.0px;top:294.7px;width:37.0px;height:11.1px;"></div>
<div class="t" style="left:1621.5px;width:300px;text-align:center;top:298.0px;font-size:6px;color:#555;">Clear Bars</div>
<div class="t" style="left:1805.0px;top:317.0px;font-size:6px;color:#555;">Last Positional</div>
<div class="t" style="left:1754.0px;top:324.0px;font-size:6px;color:#555;">Center</div>
<div style="left:1755.0px;top:344.8px;width:121.0px;height:5.0px;background:linear-gradient(#e6e6e6,#f6f6f6);border:1px solid #d0d0d0;border-radius:3px"></div>
<div style="left:1817.7px;top:340.8px;width:13px;height:13px;border-radius:50%;border:1px solid #c4c4c4;background:linear-gradient(#fafafa,#e4e4e4)"></div>
<div style="left:1755.0px;top:358.8px;width:121.0px;height:5.0px;background:linear-gradient(#e6e6e6,#f6f6f6);border:1px solid #d0d0d0;border-radius:3px"></div>
<div style="left:1817.7px;top:354.8px;width:13px;height:13px;border-radius:50%;border:1px solid #c4c4c4;background:linear-gradient(#fafafa,#e4e4e4)"></div>
<div style="left:1755.0px;top:373.5px;width:121.0px;height:5.0px;background:linear-gradient(#e6e6e6,#f6f6f6);border:1px solid #d0d0d0;border-radius:3px"></div>
<div style="left:1817.7px;top:369.5px;width:13px;height:13px;border-radius:50%;border:1px solid #c4c4c4;background:linear-gradient(#fafafa,#e4e4e4)"></div>
<div style="left:1755.0px;top:387.8px;width:121.0px;height:5.0px;background:linear-gradient(#e6e6e6,#f6f6f6);border:1px solid #d0d0d0;border-radius:3px"></div>
<div style="left:1817.7px;top:383.8px;width:13px;height:13px;border-radius:50%;border:1px solid #c4c4c4;background:linear-gradient(#fafafa,#e4e4e4)"></div>
<div style="left:1755.0px;top:402.0px;width:121.0px;height:5.0px;background:linear-gradient(#e6e6e6,#f6f6f6);border:1px solid #d0d0d0;border-radius:3px"></div>
<div style="left:1817.7px;top:398.0px;width:13px;height:13px;border-radius:50%;border:1px solid #c4c4c4;background:linear-gradient(#fafafa,#e4e4e4)"></div>
<div style="left:1755.0px;top:416.2px;width:121.0px;height:5.0px;background:linear-gradient(#e6e6e6,#f6f6f6);border:1px solid #d0d0d0;border-radius:3px"></div>
<div style="left:1817.7px;top:412.2px;width:13px;height:13px;border-radius:50%;border:1px solid #c4c4c4;background:linear-gradient(#fafafa,#e4e4e4)"></div>
<div style="left:1755.0px;top:430.7px;width:121.0px;height:5.0px;background:linear-gradient(#e6e6e6,#f6f6f6);border:1px solid #d0d0d0;border-radius:3px"></div>
<div style="left:1817.7px;top:426.7px;width:13px;height:13px;border-radius:50%;border:1px solid #c4c4c4;background:linear-gradient(#fafafa,#e4e4e4)"></div>
<div class="fld" style="left:1753.0px;top:455.5px;width:54.0px;height:13.4px;"></div>
<div class="sbu" style="left:1806.0px;top:455.5px;width:13.7px;height:6.5px;"></div>
<div class="sbd" style="left:1806.0px;top:462.8px;width:13.7px;height:6.1px;"></div>
<div class="t" style="right:117.0px;top:460.0px;font-size:6.5px;">1</div>
<div style="left:1810.6px;top:457.8px;width:0;height:0;border-left:2.2px solid transparent;border-right:2.2px solid transparent;border-bottom:2.7px solid #4a4a4a"></div>
<div style="left:1810.6px;top:464.5px;width:0;height:0;border-left:2.2px solid transparent;border-right:2.2px solid transparent;border-top:2.7px solid #4a4a4a"></div>
<div class="fld" style="left:1753.0px;top:470.0px;width:54.0px;height:13.4px;"></div>
<div class="sbu" style="left:1806.0px;top:470.0px;width:13.7px;height:6.5px;"></div>
<div class="sbd" style="left:1806.0px;top:477.3px;width:13.7px;height:6.1px;"></div>
<div class="t" style="right:117.0px;top:475.0px;font-size:6.5px;">30</div>
<div style="left:1810.6px;top:472.3px;width:0;height:0;border-left:2.2px solid transparent;border-right:2.2px solid transparent;border-bottom:2.7px solid #4a4a4a"></div>
<div style="left:1810.6px;top:479.0px;width:0;height:0;border-left:2.2px solid transparent;border-right:2.2px solid transparent;border-top:2.7px solid #4a4a4a"></div>
<div class="t" style="left:1825.3px;top:457.0px;font-size:6px;color:#555;">Max interval</div>
<div class="t" style="left:1825.3px;top:470.0px;font-size:6px;color:#555;">Full range</div>
<div style="left:1876.0px;top:90.0px;width:18.0px;height:611.0px;background:linear-gradient(90deg,#e8e8e8,#f4f4f4);border-left:1px solid #ddd"></div>
<svg style="position:absolute;left:1876px;top:90px" width="18" height="611" viewBox="0 0 18 611"><path d="M4 10 L9 5 L14 10" fill="none" stroke="#555" stroke-width="1.2"/><path d="M4 600 L9 605 L14 600" fill="none" stroke="#555" stroke-width="1.2"/><rect x="2.5" y="20.5" width="13" height="561" rx="4" fill="#f2f2f2" stroke="#b8b8b8"/></svg>
<div style="left:863.4px;top:58px;width:817.6px;height:1113.5px;background:#f4f4f4;border-radius:5px 5px 0 0;box-shadow:0 6px 22px rgba(0,0,0,.38);border:1px solid #bdbdbd;border-top-color:#d8d8d8"></div>
<div style="left:864.4px;top:59.0px;width:815.6px;height:25.8px;background:#f6f6f6;border-bottom:1px solid #d6d6d6;border-radius:5px 5px 0 0"></div>
<div style="left:873.6px;top:64.4px;width:14.0px;height:14.0px;border-radius:50%;background:#dddddd;border:0.8px solid #d0d0d0"></div>
<div style="left:897.4px;top:64.4px;width:14.0px;height:14.0px;border-radius:50%;background:#dddddd;border:0.8px solid #d0d0d0"></div>
<div style="left:921.4px;top:64.4px;width:14.0px;height:14.0px;border-radius:50%;background:#dddddd;border:0.8px solid #d0d0d0"></div>
<svg style="position:absolute;left:1205.8px;top:63.4px" width="20.0" height="16.0" viewBox="0 0 20 16"><rect x="0" y="6.2" width="5.6" height="1.5" rx=".7" fill="#3a4a48"/><rect x="1.5" y="4.2" width="3" height=".6" fill="#bbb"/><rect x="1.8" y="8.4" width="4.5" height="1.2" fill="#e89a9a"/><path d="M4.6 8.6 L6.4 1.2 L7.9 14.6 L9 4.2 L10.3 9.8 L11 9" fill="none" stroke="#e0505a" stroke-width="1.05" stroke-linejoin="round"/><rect x="11.6" y="4.3" width="3.4" height="4" fill="none" stroke="#6a6a6a" stroke-width="1.5"/><rect x="15" y="1.5" width="1.8" height="7.6" fill="#5e5e5e"/><rect x="10.6" y="9.6" width="8.8" height="1.3" fill="#a8a8a8"/><rect x="10.6" y="12" width="8.8" height="1.2" fill="#f7c0c4"/></svg>
<div class="t" style="left:1229.8px;top:65.0px;font-size:15.6px;color:#999999;">MDM FX: Pads</div>
<div class="btn" style="left:868.0px;top:85.7px;width:42.0px;height:25.7px;"></div>
<div class="t" style="left:739.0px;width:300px;text-align:center;top:91.0px;font-size:15.0px;">Get</div>
<div class="btn" style="left:911.0px;top:85.7px;width:52.5px;height:25.7px;"></div>
<div class="t" style="left:787.2px;width:300px;text-align:center;top:91.0px;font-size:15.0px;">Send</div>
<div class="btn" style="left:965.0px;top:85.7px;width:58.0px;height:25.7px;"></div>
<div class="t" style="left:844.0px;width:300px;text-align:center;top:91.0px;font-size:15.0px;">GetAll</div>
<div class="btn" style="left:1024.4px;top:85.7px;width:68.1px;height:25.7px;"></div>
<div class="t" style="left:908.5px;width:300px;text-align:center;top:91.0px;font-size:15.0px;">SendAll</div>
<div style="left:1095.0px;top:85.7px;width:2px;height:25.700000000000003px;border-left:1px solid #d0d0d0;border-right:1px solid #fafafa"></div>
<div class="btn" style="left:1100.6px;top:85.7px;width:51.3px;height:25.7px;"></div>
<div class="t" style="left:976.2px;width:300px;text-align:center;top:91.0px;font-size:15.0px;">Load</div>
<div class="btn" style="left:1153.5px;top:85.7px;width:50.0px;height:25.7px;"></div>
<div class="t" style="left:1028.5px;width:300px;text-align:center;top:91.0px;font-size:15.0px;">Save</div>
<div style="left:1206.0px;top:85.7px;width:2px;height:25.700000000000003px;border-left:1px solid #d0d0d0;border-right:1px solid #fafafa"></div>
<div class="btn" style="left:1211.0px;top:85.7px;width:53.4px;height:25.7px;"></div>
<div class="t" style="left:1087.7px;width:300px;text-align:center;top:91.0px;font-size:15.0px;">Copy</div>
<div class="t" style="left:868.0px;top:121.0px;font-size:14.8px;">Input(s):</div>
<div class="btn" style="left:921.6px;top:116.7px;width:202.4px;height:22.2px;"></div>
<div class="t" style="left:931.0px;top:122.0px;font-size:13.3px;">2 HiHatB/3 HiHatE</div>
<div style="left:1106.5px;top:125.8px;width:0;height:0;border-left:5.0px solid transparent;border-right:5.0px solid transparent;border-top:5.0px solid #4d4d4d"></div>
<div class="btn" style="left:1126.0px;top:114.0px;width:47.1px;height:26.2px;"></div>
<div class="t" style="left:999.5px;width:300px;text-align:center;top:120.0px;font-size:15.0px;">First</div>
<div class="btn" style="left:1175.0px;top:114.0px;width:47.2px;height:26.2px;"></div>
<div class="t" style="left:1048.6px;width:300px;text-align:center;top:120.0px;font-size:15.0px;">Prev</div>
<div class="btn" style="left:1223.7px;top:114.0px;width:48.5px;height:26.2px;"></div>
<div class="t" style="left:1098.0px;width:300px;text-align:center;top:120.0px;font-size:15.0px;">Next</div>
<div class="btn" style="left:1274.0px;top:114.0px;width:46.6px;height:26.2px;"></div>
<div class="t" style="left:1147.3px;width:300px;text-align:center;top:120.0px;font-size:15.0px;">Last</div>
<div style="left:868.0px;top:142.5px;width:403.0px;height:848px;border:1px solid #c9c9c9;background:#f4f4f4"></div>
<div style="left:868.0px;top:142.5px;width:403.0px;height:33.1px;background:#d3d3d3"></div>
<div class="t" style="left:969.5px;width:200px;text-align:center;top:152.0px;font-size:17.8px;">Head/Bow</div>
<div class="t" style="right:907.0px;top:185.0px;font-size:18.0px;">Name</div>
<div class="btn" style="left:1019.5px;top:176.5px;width:200.8px;height:33.2px;"></div>
<div class="t" style="left:1031.5px;top:185.0px;font-size:18.4px;">HiHatB</div>
<div style="left:1197.2px;top:190.6px;width:0;height:0;border-left:5.5px solid transparent;border-right:5.5px solid transparent;border-top:6.0px solid #4d4d4d"></div>
<div class="btn" style="left:1225.6px;top:178.3px;width:28.0px;height:28.0px;"></div>
<div class="t" style="left:1089.6px;width:300px;text-align:center;top:185.0px;font-size:14.5px;">c</div>
<div class="t" style="right:907.0px;top:219.0px;font-size:18.0px;">Disabled</div>
<div class="chk" style="left:1019.5px;top:216.2px;width:21.8px;height:21.3px;"></div>
<div class="btn" style="left:1225.6px;top:212.1px;width:28.0px;height:28.0px;"></div>
<div class="t" style="left:1089.6px;width:300px;text-align:center;top:219.0px;font-size:14.5px;">c</div>
<div class="t" style="right:907.0px;top:253.0px;font-size:18.0px;">Note</div>
<div class="fld" style="left:1019.5px;top:244.4px;width:63.7px;height:32.6px;"></div>
<div class="sbu" style="left:1082.2px;top:244.4px;width:28.3px;height:16.1px;"></div>
<div class="sbd" style="left:1082.2px;top:261.3px;width:28.3px;height:15.7px;"></div>
<div class="t" style="left:1032.7px;top:252.0px;font-size:19.5px;letter-spacing:1.17px;">46</div>
<div style="left:1091.8px;top:250.6px;width:0;height:0;border-left:4.5px solid transparent;border-right:4.5px solid transparent;border-bottom:4.5px solid #4a4a4a"></div>
<div style="left:1091.8px;top:266.9px;width:0;height:0;border-left:4.5px solid transparent;border-right:4.5px solid transparent;border-top:4.5px solid #4a4a4a"></div>
<div class="t" style="left:1153.3px;top:252.0px;font-size:19.4px;">A# 0</div>
<div class="btn" style="left:1225.6px;top:245.9px;width:28.0px;height:28.0px;"></div>
<div class="t" style="left:1089.6px;width:300px;text-align:center;top:253.0px;font-size:14.5px;">c</div>
<div class="t" style="right:907.0px;top:286.0px;font-size:18.0px;">AltNote</div>
<div class="fld" style="left:1019.5px;top:278.2px;width:63.7px;height:32.6px;"></div>
<div class="sbu" style="left:1082.2px;top:278.2px;width:28.3px;height:16.1px;"></div>
<div class="sbd" style="left:1082.2px;top:295.1px;width:28.3px;height:15.7px;"></div>
<div class="t" style="left:1032.7px;top:286.0px;font-size:19.5px;letter-spacing:1.17px;">46</div>
<div style="left:1091.8px;top:284.4px;width:0;height:0;border-left:4.5px solid transparent;border-right:4.5px solid transparent;border-bottom:4.5px solid #4a4a4a"></div>
<div style="left:1091.8px;top:300.7px;width:0;height:0;border-left:4.5px solid transparent;border-right:4.5px solid transparent;border-top:4.5px solid #4a4a4a"></div>
<div class="t" style="left:1153.3px;top:286.0px;font-size:19.4px;">A# 0</div>
<div class="chk" style="left:1202.0px;top:286.7px;width:15.6px;height:15.6px;"></div>
<div class="btn" style="left:1225.6px;top:279.7px;width:28.0px;height:28.0px;"></div>
<div class="t" style="left:1089.6px;width:300px;text-align:center;top:287.0px;font-size:14.5px;">c</div>
<div class="t" style="right:907.0px;top:320.0px;font-size:18.0px;">PressrollNote</div>
<div class="fld" style="left:1019.5px;top:312.0px;width:63.7px;height:32.6px;"></div>
<div class="sbu" style="left:1082.2px;top:312.0px;width:28.3px;height:16.1px;"></div>
<div class="sbd" style="left:1082.2px;top:328.9px;width:28.3px;height:15.7px;"></div>
<div class="t" style="left:1032.7px;top:320.0px;font-size:19.5px;letter-spacing:1.17px;">46</div>
<div style="left:1091.8px;top:318.2px;width:0;height:0;border-left:4.5px solid transparent;border-right:4.5px solid transparent;border-bottom:4.5px solid #4a4a4a"></div>
<div style="left:1091.8px;top:334.5px;width:0;height:0;border-left:4.5px solid transparent;border-right:4.5px solid transparent;border-top:4.5px solid #4a4a4a"></div>
<div class="t" style="left:1153.3px;top:320.0px;font-size:19.4px;">A# 0</div>
<div class="chk" style="left:1202.0px;top:320.5px;width:15.6px;height:15.6px;"></div>
<div class="btn" style="left:1225.6px;top:313.5px;width:28.0px;height:28.0px;"></div>
<div class="t" style="left:1089.6px;width:300px;text-align:center;top:321.0px;font-size:14.5px;">c</div>
<div class="t" style="right:907.0px;top:354.0px;font-size:18.0px;">Channel</div>
<div class="fld" style="left:1019.5px;top:345.8px;width:75.1px;height:32.6px;"></div>
<div class="sbu" style="left:1093.6px;top:345.8px;width:27.4px;height:16.1px;"></div>
<div class="sbd" style="left:1093.6px;top:362.8px;width:27.4px;height:15.7px;"></div>
<div class="t" style="left:1030.5px;top:354.0px;font-size:19.5px;letter-spacing:1.17px;">10</div>
<div style="left:1102.8px;top:352.1px;width:0;height:0;border-left:4.5px solid transparent;border-right:4.5px solid transparent;border-bottom:4.5px solid #4a4a4a"></div>
<div style="left:1102.8px;top:368.3px;width:0;height:0;border-left:4.5px solid transparent;border-right:4.5px solid transparent;border-top:4.5px solid #4a4a4a"></div>
<div class="btn" style="left:1225.6px;top:347.3px;width:28.0px;height:28.0px;"></div>
<div class="t" style="left:1089.6px;width:300px;text-align:center;top:355.0px;font-size:14.5px;">c</div>
<div class="t" style="right:907.0px;top:388.0px;font-size:18.0px;">Function</div>
<div class="btn" style="left:1019.5px;top:379.4px;width:200.8px;height:33.2px;"></div>
<div class="t" style="left:1029.0px;top:390.0px;font-size:14.8px;">Normal</div>
<div style="left:1200.5px;top:394.0px;width:0;height:0;border-left:5.0px solid transparent;border-right:5.0px solid transparent;border-top:5.0px solid #4d4d4d"></div>
<div class="btn" style="left:1225.6px;top:381.2px;width:28.0px;height:28.0px;"></div>
<div class="t" style="left:1089.6px;width:300px;text-align:center;top:388.0px;font-size:14.5px;">c</div>
<div class="t" style="right:907.0px;top:422.0px;font-size:18.0px;">Curve</div>
<div class="btn" style="left:1019.5px;top:413.2px;width:200.8px;height:33.2px;"></div>
<div class="t" style="left:1029.0px;top:423.0px;font-size:14.8px;">Log1Custom2</div>
<div style="left:1200.5px;top:427.8px;width:0;height:0;border-left:5.0px solid transparent;border-right:5.0px solid transparent;border-top:5.0px solid #4d4d4d"></div>
<div class="btn" style="left:1225.6px;top:415.0px;width:28.0px;height:28.0px;"></div>
<div class="t" style="left:1089.6px;width:300px;text-align:center;top:422.0px;font-size:14.5px;">c</div>
<div class="t" style="right:907.0px;top:456.0px;font-size:18.0px;">Compression</div>
<div class="btn" style="left:1019.5px;top:447.0px;width:200.8px;height:33.2px;"></div>
<div class="t" style="left:1031.0px;top:455.0px;font-size:19.5px;">0</div>
<div style="left:1197.2px;top:461.1px;width:0;height:0;border-left:5.5px solid transparent;border-right:5.5px solid transparent;border-top:6.0px solid #4d4d4d"></div>
<div class="btn" style="left:1225.6px;top:448.8px;width:28.0px;height:28.0px;"></div>
<div class="t" style="left:1089.6px;width:300px;text-align:center;top:456.0px;font-size:14.5px;">c</div>
<div class="t" style="right:907.0px;top:489.0px;font-size:18.0px;">Level Shift</div>
<div class="btn" style="left:1019.5px;top:480.8px;width:200.8px;height:33.2px;"></div>
<div class="t" style="left:1031.0px;top:489.0px;font-size:19.5px;">0</div>
<div style="left:1197.2px;top:494.9px;width:0;height:0;border-left:5.5px solid transparent;border-right:5.5px solid transparent;border-top:6.0px solid #4d4d4d"></div>
<div class="btn" style="left:1225.6px;top:482.6px;width:28.0px;height:28.0px;"></div>
<div class="t" style="left:1089.6px;width:300px;text-align:center;top:490.0px;font-size:14.5px;">c</div>
<div class="t" style="right:907.0px;top:523.0px;font-size:18.0px;">XTalk Level</div>
<div class="btn" style="left:1019.5px;top:514.6px;width:200.8px;height:33.2px;"></div>
<div class="t" style="left:1031.0px;top:523.0px;font-size:19.5px;">4</div>
<div style="left:1197.2px;top:528.7px;width:0;height:0;border-left:5.5px solid transparent;border-right:5.5px solid transparent;border-top:6.0px solid #4d4d4d"></div>
<div class="btn" style="left:1225.6px;top:516.4px;width:28.0px;height:28.0px;"></div>
<div class="t" style="left:1089.6px;width:300px;text-align:center;top:524.0px;font-size:14.5px;">c</div>
<div class="t" style="right:907.0px;top:557.0px;font-size:18.0px;">XTalk Group</div>
<div class="btn" style="left:1019.5px;top:548.4px;width:200.8px;height:33.2px;"></div>
<div class="t" style="left:1031.0px;top:557.0px;font-size:19.5px;">0</div>
<div style="left:1197.2px;top:562.5px;width:0;height:0;border-left:5.5px solid transparent;border-right:5.5px solid transparent;border-top:6.0px solid #4d4d4d"></div>
<div class="btn" style="left:1225.6px;top:550.2px;width:28.0px;height:28.0px;"></div>
<div class="t" style="left:1089.6px;width:300px;text-align:center;top:557.0px;font-size:14.5px;">c</div>
<div class="t" style="right:907.0px;top:591.0px;font-size:18.0px;">Threshold</div>
<div class="fld" style="left:1019.5px;top:582.5px;width:75.1px;height:32.6px;"></div>
<div class="sbu" style="left:1093.6px;top:582.5px;width:27.4px;height:16.1px;"></div>
<div class="sbd" style="left:1093.6px;top:599.4px;width:27.4px;height:15.7px;"></div>
<div class="t" style="left:1030.5px;top:590.0px;font-size:19.5px;letter-spacing:1.17px;">30</div>
<div style="left:1102.8px;top:588.7px;width:0;height:0;border-left:4.5px solid transparent;border-right:4.5px solid transparent;border-bottom:4.5px solid #4a4a4a"></div>
<div style="left:1102.8px;top:605.0px;width:0;height:0;border-left:4.5px solid transparent;border-right:4.5px solid transparent;border-top:4.5px solid #4a4a4a"></div>
<div class="btn" style="left:1225.6px;top:584.0px;width:28.0px;height:28.0px;"></div>
<div class="t" style="left:1089.6px;width:300px;text-align:center;top:591.0px;font-size:14.5px;">c</div>
<div class="t" style="right:907.0px;top:625.0px;font-size:18.0px;">Gain</div>
<div class="btn" style="left:1019.5px;top:616.0px;width:200.8px;height:33.2px;"></div>
<div class="t" style="left:1031.0px;top:624.0px;font-size:19.5px;">4</div>
<div style="left:1197.2px;top:630.1px;width:0;height:0;border-left:5.5px solid transparent;border-right:5.5px solid transparent;border-top:6.0px solid #4d4d4d"></div>
<div class="btn" style="left:1225.6px;top:617.8px;width:28.0px;height:28.0px;"></div>
<div class="t" style="left:1089.6px;width:300px;text-align:center;top:625.0px;font-size:14.5px;">c</div>
<div class="t" style="right:907.0px;top:658.0px;font-size:18.0px;">HighLevelAuto</div>
<div class="chk" style="left:1019.5px;top:655.7px;width:21.8px;height:21.3px;"></div>
<svg style="position:absolute;left:1019.5px;top:655.7px" width="21.8" height="21.3" viewBox="0 0 24 24"><path d="M5 12.5 L10 19 L20 4" fill="none" stroke="#333" stroke-width="2.4" stroke-linejoin="miter"/></svg>
<div class="btn" style="left:1225.6px;top:651.6px;width:28.0px;height:28.0px;"></div>
<div class="t" style="left:1089.6px;width:300px;text-align:center;top:659.0px;font-size:14.5px;">c</div>
<div class="t" style="right:907.0px;top:692.0px;font-size:18.0px;">HighLevel</div>
<div class="fld" style="left:1019.5px;top:684.0px;width:75.1px;height:32.6px;"></div>
<div class="sbu" style="left:1093.6px;top:684.0px;width:27.4px;height:16.1px;"></div>
<div class="sbd" style="left:1093.6px;top:700.9px;width:27.4px;height:15.7px;"></div>
<div class="t" style="left:1030.5px;top:692.0px;font-size:19.5px;letter-spacing:1.17px;">64</div>
<div style="left:1102.8px;top:690.1px;width:0;height:0;border-left:4.5px solid transparent;border-right:4.5px solid transparent;border-bottom:4.5px solid #4a4a4a"></div>
<div style="left:1102.8px;top:706.4px;width:0;height:0;border-left:4.5px solid transparent;border-right:4.5px solid transparent;border-top:4.5px solid #4a4a4a"></div>
<div class="btn" style="left:1225.6px;top:685.5px;width:28.0px;height:28.0px;"></div>
<div class="t" style="left:1089.6px;width:300px;text-align:center;top:693.0px;font-size:14.5px;">c</div>
<div class="t" style="right:907.0px;top:726.0px;font-size:18.0px;">Retrigger Mask</div>
<div class="fld" style="left:1019.5px;top:717.8px;width:75.1px;height:32.6px;"></div>
<div class="sbu" style="left:1093.6px;top:717.8px;width:27.4px;height:16.1px;"></div>
<div class="sbd" style="left:1093.6px;top:734.7px;width:27.4px;height:15.7px;"></div>
<div class="t" style="left:1030.5px;top:726.0px;font-size:19.5px;letter-spacing:1.17px;">8</div>
<div style="left:1102.8px;top:724.0px;width:0;height:0;border-left:4.5px solid transparent;border-right:4.5px solid transparent;border-bottom:4.5px solid #4a4a4a"></div>
<div style="left:1102.8px;top:740.3px;width:0;height:0;border-left:4.5px solid transparent;border-right:4.5px solid transparent;border-top:4.5px solid #4a4a4a"></div>
<div class="btn" style="left:1225.6px;top:719.3px;width:28.0px;height:28.0px;"></div>
<div class="t" style="left:1089.6px;width:300px;text-align:center;top:726.0px;font-size:14.5px;">c</div>
<div class="t" style="right:907.0px;top:760.0px;font-size:18.0px;">DynLevel</div>
<div class="btn" style="left:1019.5px;top:751.3px;width:200.8px;height:33.2px;"></div>
<div class="t" style="left:1031.0px;top:759.0px;font-size:19.5px;">12</div>
<div style="left:1197.2px;top:765.4px;width:0;height:0;border-left:5.5px solid transparent;border-right:5.5px solid transparent;border-top:6.0px solid #4d4d4d"></div>
<div class="btn" style="left:1225.6px;top:753.1px;width:28.0px;height:28.0px;"></div>
<div class="t" style="left:1089.6px;width:300px;text-align:center;top:760.0px;font-size:14.5px;">c</div>
<div class="t" style="right:907.0px;top:794.0px;font-size:18.0px;">DynTime</div>
<div class="btn" style="left:1019.5px;top:785.1px;width:200.8px;height:33.2px;"></div>
<div class="t" style="left:1031.0px;top:793.0px;font-size:19.5px;">24</div>
<div style="left:1197.2px;top:799.2px;width:0;height:0;border-left:5.5px solid transparent;border-right:5.5px solid transparent;border-top:6.0px solid #4d4d4d"></div>
<div class="btn" style="left:1225.6px;top:786.9px;width:28.0px;height:28.0px;"></div>
<div class="t" style="left:1089.6px;width:300px;text-align:center;top:794.0px;font-size:14.5px;">c</div>
<div class="t" style="right:907.0px;top:827.0px;font-size:18.0px;">MinScan</div>
<div class="fld" style="left:1019.5px;top:819.2px;width:75.1px;height:32.6px;"></div>
<div class="sbu" style="left:1093.6px;top:819.2px;width:27.4px;height:16.1px;"></div>
<div class="sbd" style="left:1093.6px;top:836.1px;width:27.4px;height:15.7px;"></div>
<div class="t" style="left:1030.5px;top:827.0px;font-size:19.5px;letter-spacing:1.17px;">20</div>
<div style="left:1102.8px;top:825.4px;width:0;height:0;border-left:4.5px solid transparent;border-right:4.5px solid transparent;border-bottom:4.5px solid #4a4a4a"></div>
<div style="left:1102.8px;top:841.7px;width:0;height:0;border-left:4.5px solid transparent;border-right:4.5px solid transparent;border-top:4.5px solid #4a4a4a"></div>
<div class="btn" style="left:1225.6px;top:820.7px;width:28.0px;height:28.0px;"></div>
<div class="t" style="left:1089.6px;width:300px;text-align:center;top:828.0px;font-size:14.5px;">c</div>
<div class="t" style="right:907.0px;top:861.0px;font-size:18.0px;">Pos Level</div>
<div class="btn" style="left:1019.5px;top:852.7px;width:200.8px;height:33.2px;"></div>
<div class="t" style="left:1031.5px;top:861.0px;font-size:18.4px;">Disabled</div>
<div style="left:1197.2px;top:866.8px;width:0;height:0;border-left:5.5px solid transparent;border-right:5.5px solid transparent;border-top:6.0px solid #4d4d4d"></div>
<div class="btn" style="left:1225.6px;top:854.5px;width:28.0px;height:28.0px;"></div>
<div class="t" style="left:1089.6px;width:300px;text-align:center;top:862.0px;font-size:14.5px;">c</div>
<div class="t" style="right:907.0px;top:895.0px;font-size:18.0px;">Pos Low</div>
<div class="fld" style="left:1019.5px;top:886.8px;width:75.1px;height:32.6px;"></div>
<div class="sbu" style="left:1093.6px;top:886.8px;width:27.4px;height:16.1px;"></div>
<div class="sbd" style="left:1093.6px;top:903.7px;width:27.4px;height:15.7px;"></div>
<div class="t" style="left:1030.5px;top:895.0px;font-size:19.5px;letter-spacing:1.17px;">5</div>
<div style="left:1102.8px;top:893.0px;width:0;height:0;border-left:4.5px solid transparent;border-right:4.5px solid transparent;border-bottom:4.5px solid #4a4a4a"></div>
<div style="left:1102.8px;top:909.3px;width:0;height:0;border-left:4.5px solid transparent;border-right:4.5px solid transparent;border-top:4.5px solid #4a4a4a"></div>
<div class="btn" style="left:1225.6px;top:888.3px;width:28.0px;height:28.0px;"></div>
<div class="t" style="left:1089.6px;width:300px;text-align:center;top:895.0px;font-size:14.5px;">c</div>
<div class="t" style="right:907.0px;top:929.0px;font-size:18.0px;">Pos High</div>
<div class="fld" style="left:1019.5px;top:920.6px;width:75.1px;height:32.6px;"></div>
<div class="sbu" style="left:1093.6px;top:920.6px;width:27.4px;height:16.1px;"></div>
<div class="sbd" style="left:1093.6px;top:937.5px;width:27.4px;height:15.7px;"></div>
<div class="t" style="left:1030.5px;top:928.0px;font-size:19.5px;letter-spacing:1.17px;">15</div>
<div style="left:1102.8px;top:926.8px;width:0;height:0;border-left:4.5px solid transparent;border-right:4.5px solid transparent;border-bottom:4.5px solid #4a4a4a"></div>
<div style="left:1102.8px;top:943.1px;width:0;height:0;border-left:4.5px solid transparent;border-right:4.5px solid transparent;border-top:4.5px solid #4a4a4a"></div>
<div class="btn" style="left:1225.6px;top:922.1px;width:28.0px;height:28.0px;"></div>
<div class="t" style="left:1089.6px;width:300px;text-align:center;top:929.0px;font-size:14.5px;">c</div>
<div class="t" style="right:907.0px;top:963.0px;font-size:18.0px;">Type</div>
<div class="btn" style="left:1019.5px;top:954.1px;width:200.8px;height:33.2px;"></div>
<div class="t" style="left:1029.0px;top:966.0px;font-size:12.3px;">Dual or 3way Yamaha</div>
<div style="left:1200.5px;top:968.7px;width:0;height:0;border-left:5.0px solid transparent;border-right:5.0px solid transparent;border-top:5.0px solid #4d4d4d"></div>
<div class="btn" style="left:1225.6px;top:955.9px;width:28.0px;height:28.0px;"></div>
<div class="t" style="left:1089.6px;width:300px;text-align:center;top:963.0px;font-size:14.5px;">c</div>
<div style="left:1276.2px;top:142.5px;width:403.0px;height:848px;border:1px solid #c9c9c9;background:#f4f4f4"></div>
<div style="left:1276.2px;top:142.5px;width:403.0px;height:33.1px;background:#d3d3d3"></div>
<div class="t" style="left:1377.7px;width:200px;text-align:center;top:152.0px;font-size:17.8px;">Rim/Edge</div>
<div class="t" style="right:498.8px;top:185.0px;font-size:18.0px;">Name</div>
<div class="btn" style="left:1427.7px;top:176.5px;width:200.8px;height:33.2px;"></div>
<div class="t" style="left:1439.7px;top:185.0px;font-size:18.4px;">HiHatE</div>
<div style="left:1605.4px;top:190.6px;width:0;height:0;border-left:5.5px solid transparent;border-right:5.5px solid transparent;border-top:6.0px solid #4d4d4d"></div>
<div class="btn" style="left:1633.8px;top:178.3px;width:28.0px;height:28.0px;"></div>
<div class="t" style="left:1497.8px;width:300px;text-align:center;top:185.0px;font-size:14.5px;">c</div>
<div class="t" style="right:498.8px;top:219.0px;font-size:18.0px;">Disabled</div>
<div class="chk" style="left:1427.7px;top:216.2px;width:21.8px;height:21.3px;"></div>
<div class="btn" style="left:1633.8px;top:212.1px;width:28.0px;height:28.0px;"></div>
<div class="t" style="left:1497.8px;width:300px;text-align:center;top:219.0px;font-size:14.5px;">c</div>
<div class="t" style="right:498.8px;top:253.0px;font-size:18.0px;">Note</div>
<div class="fld" style="left:1427.7px;top:244.4px;width:63.7px;height:32.6px;"></div>
<div class="sbu" style="left:1490.4px;top:244.4px;width:28.3px;height:16.1px;"></div>
<div class="sbd" style="left:1490.4px;top:261.3px;width:28.3px;height:15.7px;"></div>
<div class="t" style="left:1440.9px;top:252.0px;font-size:19.5px;letter-spacing:1.17px;">26</div>
<div style="left:1500.1px;top:250.6px;width:0;height:0;border-left:4.5px solid transparent;border-right:4.5px solid transparent;border-bottom:4.5px solid #4a4a4a"></div>
<div style="left:1500.1px;top:266.9px;width:0;height:0;border-left:4.5px solid transparent;border-right:4.5px solid transparent;border-top:4.5px solid #4a4a4a"></div>
<div class="t" style="left:1561.5px;top:252.0px;font-size:19.2px;">D</div>
<div class="t" style="right:319.5px;top:252.0px;font-size:19.2px;">-1</div>
<div class="btn" style="left:1633.8px;top:245.9px;width:28.0px;height:28.0px;"></div>
<div class="t" style="left:1497.8px;width:300px;text-align:center;top:253.0px;font-size:14.5px;">c</div>
<div class="t" style="right:498.8px;top:286.0px;font-size:18.0px;">AltNote</div>
<div class="fld" style="left:1427.7px;top:278.2px;width:63.7px;height:32.6px;"></div>
<div class="sbu" style="left:1490.4px;top:278.2px;width:28.3px;height:16.1px;"></div>
<div class="sbd" style="left:1490.4px;top:295.1px;width:28.3px;height:15.7px;"></div>
<div class="t" style="left:1440.9px;top:286.0px;font-size:19.5px;letter-spacing:1.17px;">26</div>
<div style="left:1500.1px;top:284.4px;width:0;height:0;border-left:4.5px solid transparent;border-right:4.5px solid transparent;border-bottom:4.5px solid #4a4a4a"></div>
<div style="left:1500.1px;top:300.7px;width:0;height:0;border-left:4.5px solid transparent;border-right:4.5px solid transparent;border-top:4.5px solid #4a4a4a"></div>
<div class="t" style="left:1561.5px;top:286.0px;font-size:19.2px;">D</div>
<div class="t" style="right:321.5px;top:286.0px;font-size:19.2px;">-1</div>
<div class="chk" style="left:1610.2px;top:286.7px;width:15.6px;height:15.6px;"></div>
<div class="btn" style="left:1633.8px;top:279.7px;width:28.0px;height:28.0px;"></div>
<div class="t" style="left:1497.8px;width:300px;text-align:center;top:287.0px;font-size:14.5px;">c</div>
<div class="t" style="right:498.8px;top:320.0px;font-size:18.0px;">PressrollNote</div>
<div class="fld" style="left:1427.7px;top:312.0px;width:63.7px;height:32.6px;"></div>
<div class="sbu" style="left:1490.4px;top:312.0px;width:28.3px;height:16.1px;"></div>
<div class="sbd" style="left:1490.4px;top:328.9px;width:28.3px;height:15.7px;"></div>
<div class="t" style="left:1440.9px;top:320.0px;font-size:19.5px;letter-spacing:1.17px;">26</div>
<div style="left:1500.1px;top:318.2px;width:0;height:0;border-left:4.5px solid transparent;border-right:4.5px solid transparent;border-bottom:4.5px solid #4a4a4a"></div>
<div style="left:1500.1px;top:334.5px;width:0;height:0;border-left:4.5px solid transparent;border-right:4.5px solid transparent;border-top:4.5px solid #4a4a4a"></div>
<div class="t" style="left:1561.5px;top:319.0px;font-size:19.2px;">D</div>
<div class="t" style="right:321.5px;top:319.0px;font-size:19.2px;">-1</div>
<div class="chk" style="left:1610.2px;top:320.5px;width:15.6px;height:15.6px;"></div>
<div class="btn" style="left:1633.8px;top:313.5px;width:28.0px;height:28.0px;"></div>
<div class="t" style="left:1497.8px;width:300px;text-align:center;top:321.0px;font-size:14.5px;">c</div>
<div class="t" style="right:498.8px;top:354.0px;font-size:18.0px;">Channel</div>
<div class="fld" style="left:1427.7px;top:345.8px;width:75.1px;height:32.6px;"></div>
<div class="sbu" style="left:1501.8px;top:345.8px;width:27.4px;height:16.1px;"></div>
<div class="sbd" style="left:1501.8px;top:362.8px;width:27.4px;height:15.7px;"></div>
<div class="t" style="left:1438.7px;top:354.0px;font-size:19.5px;letter-spacing:1.17px;">10</div>
<div style="left:1511.0px;top:352.1px;width:0;height:0;border-left:4.5px solid transparent;border-right:4.5px solid transparent;border-bottom:4.5px solid #4a4a4a"></div>
<div style="left:1511.0px;top:368.3px;width:0;height:0;border-left:4.5px solid transparent;border-right:4.5px solid transparent;border-top:4.5px solid #4a4a4a"></div>
<div class="btn" style="left:1633.8px;top:347.3px;width:28.0px;height:28.0px;"></div>
<div class="t" style="left:1497.8px;width:300px;text-align:center;top:355.0px;font-size:14.5px;">c</div>
<div class="t" style="right:498.8px;top:388.0px;font-size:18.0px;">Function</div>
<div class="btn" style="left:1427.7px;top:379.4px;width:200.8px;height:33.2px;"></div>
<div class="t" style="left:1437.2px;top:390.0px;font-size:14.8px;">Normal</div>
<div style="left:1608.7px;top:394.0px;width:0;height:0;border-left:5.0px solid transparent;border-right:5.0px solid transparent;border-top:5.0px solid #4d4d4d"></div>
<div class="btn" style="left:1633.8px;top:381.2px;width:28.0px;height:28.0px;"></div>
<div class="t" style="left:1497.8px;width:300px;text-align:center;top:388.0px;font-size:14.5px;">c</div>
<div class="t" style="right:498.8px;top:422.0px;font-size:18.0px;">Curve</div>
<div class="btn" style="left:1427.7px;top:413.2px;width:200.8px;height:33.2px;"></div>
<div class="t" style="left:1437.2px;top:423.0px;font-size:14.8px;">Log1Custom2</div>
<div style="left:1608.7px;top:427.8px;width:0;height:0;border-left:5.0px solid transparent;border-right:5.0px solid transparent;border-top:5.0px solid #4d4d4d"></div>
<div class="btn" style="left:1633.8px;top:415.0px;width:28.0px;height:28.0px;"></div>
<div class="t" style="left:1497.8px;width:300px;text-align:center;top:422.0px;font-size:14.5px;">c</div>
<div class="t" style="right:498.8px;top:456.0px;font-size:18.0px;">Compression</div>
<div class="btn" style="left:1427.7px;top:447.0px;width:200.8px;height:33.2px;"></div>
<div class="t" style="left:1439.2px;top:455.0px;font-size:19.5px;">0</div>
<div style="left:1605.4px;top:461.1px;width:0;height:0;border-left:5.5px solid transparent;border-right:5.5px solid transparent;border-top:6.0px solid #4d4d4d"></div>
<div class="btn" style="left:1633.8px;top:448.8px;width:28.0px;height:28.0px;"></div>
<div class="t" style="left:1497.8px;width:300px;text-align:center;top:456.0px;font-size:14.5px;">c</div>
<div class="t" style="right:498.8px;top:489.0px;font-size:18.0px;">Level Shift</div>
<div class="btn" style="left:1427.7px;top:480.8px;width:200.8px;height:33.2px;"></div>
<div class="t" style="left:1439.2px;top:489.0px;font-size:19.5px;">0</div>
<div style="left:1605.4px;top:494.9px;width:0;height:0;border-left:5.5px solid transparent;border-right:5.5px solid transparent;border-top:6.0px solid #4d4d4d"></div>
<div class="btn" style="left:1633.8px;top:482.6px;width:28.0px;height:28.0px;"></div>
<div class="t" style="left:1497.8px;width:300px;text-align:center;top:490.0px;font-size:14.5px;">c</div>
<div class="t" style="right:498.8px;top:523.0px;font-size:18.0px;">XTalk Level</div>
<div class="btn" style="left:1427.7px;top:514.6px;width:200.8px;height:33.2px;"></div>
<div class="t" style="left:1439.2px;top:523.0px;font-size:19.5px;">4</div>
<div style="left:1605.4px;top:528.7px;width:0;height:0;border-left:5.5px solid transparent;border-right:5.5px solid transparent;border-top:6.0px solid #4d4d4d"></div>
<div class="btn" style="left:1633.8px;top:516.4px;width:28.0px;height:28.0px;"></div>
<div class="t" style="left:1497.8px;width:300px;text-align:center;top:524.0px;font-size:14.5px;">c</div>
<div class="t" style="right:498.8px;top:557.0px;font-size:18.0px;">XTalk Group</div>
<div class="btn" style="left:1427.7px;top:548.4px;width:200.8px;height:33.2px;"></div>
<div class="t" style="left:1439.2px;top:557.0px;font-size:19.5px;">0</div>
<div style="left:1605.4px;top:562.5px;width:0;height:0;border-left:5.5px solid transparent;border-right:5.5px solid transparent;border-top:6.0px solid #4d4d4d"></div>
<div class="btn" style="left:1633.8px;top:550.2px;width:28.0px;height:28.0px;"></div>
<div class="t" style="left:1497.8px;width:300px;text-align:center;top:557.0px;font-size:14.5px;">c</div>
<div class="t" style="right:498.8px;top:591.0px;font-size:18.0px;">Threshold</div>
<div class="fld" style="left:1427.7px;top:582.5px;width:75.1px;height:32.6px;"></div>
<div class="sbu" style="left:1501.8px;top:582.5px;width:27.4px;height:16.1px;"></div>
<div class="sbd" style="left:1501.8px;top:599.4px;width:27.4px;height:15.7px;"></div>
<div class="t" style="left:1438.7px;top:590.0px;font-size:19.5px;letter-spacing:1.17px;">30</div>
<div style="left:1511.0px;top:588.7px;width:0;height:0;border-left:4.5px solid transparent;border-right:4.5px solid transparent;border-bottom:4.5px solid #4a4a4a"></div>
<div style="left:1511.0px;top:605.0px;width:0;height:0;border-left:4.5px solid transparent;border-right:4.5px solid transparent;border-top:4.5px solid #4a4a4a"></div>
<div class="btn" style="left:1633.8px;top:584.0px;width:28.0px;height:28.0px;"></div>
<div class="t" style="left:1497.8px;width:300px;text-align:center;top:591.0px;font-size:14.5px;">c</div>
<div class="t" style="right:498.8px;top:625.0px;font-size:18.0px;">Gain</div>
<div class="btn" style="left:1427.7px;top:616.0px;width:200.8px;height:33.2px;"></div>
<div class="t" style="left:1439.2px;top:624.0px;font-size:19.5px;">4</div>
<div style="left:1605.4px;top:630.1px;width:0;height:0;border-left:5.5px solid transparent;border-right:5.5px solid transparent;border-top:6.0px solid #4d4d4d"></div>
<div class="btn" style="left:1633.8px;top:617.8px;width:28.0px;height:28.0px;"></div>
<div class="t" style="left:1497.8px;width:300px;text-align:center;top:625.0px;font-size:14.5px;">c</div>
<div class="t" style="right:498.8px;top:658.0px;font-size:18.0px;">HighLevelAuto</div>
<div class="chk" style="left:1427.7px;top:655.7px;width:21.8px;height:21.3px;"></div>
<svg style="position:absolute;left:1427.7px;top:655.7px" width="21.8" height="21.3" viewBox="0 0 24 24"><path d="M5 12.5 L10 19 L20 4" fill="none" stroke="#333" stroke-width="2.4" stroke-linejoin="miter"/></svg>
<div class="btn" style="left:1633.8px;top:651.6px;width:28.0px;height:28.0px;"></div>
<div class="t" style="left:1497.8px;width:300px;text-align:center;top:659.0px;font-size:14.5px;">c</div>
<div class="t" style="right:498.8px;top:692.0px;font-size:18.0px;">HighLevel</div>
<div class="fld" style="left:1427.7px;top:684.0px;width:75.1px;height:32.6px;"></div>
<div class="sbu" style="left:1501.8px;top:684.0px;width:27.4px;height:16.1px;"></div>
<div class="sbd" style="left:1501.8px;top:700.9px;width:27.4px;height:15.7px;"></div>
<div class="t" style="left:1438.7px;top:692.0px;font-size:19.5px;letter-spacing:1.17px;">64</div>
<div style="left:1511.0px;top:690.1px;width:0;height:0;border-left:4.5px solid transparent;border-right:4.5px solid transparent;border-bottom:4.5px solid #4a4a4a"></div>
<div style="left:1511.0px;top:706.4px;width:0;height:0;border-left:4.5px solid transparent;border-right:4.5px solid transparent;border-top:4.5px solid #4a4a4a"></div>
<div class="btn" style="left:1633.8px;top:685.5px;width:28.0px;height:28.0px;"></div>
<div class="t" style="left:1497.8px;width:300px;text-align:center;top:693.0px;font-size:14.5px;">c</div>
<div class="t" style="right:498.8px;top:726.0px;font-size:18.0px;">Retrigger Mask</div>
<div class="fld" style="left:1427.7px;top:717.8px;width:75.1px;height:32.6px;"></div>
<div class="sbu" style="left:1501.8px;top:717.8px;width:27.4px;height:16.1px;"></div>
<div class="sbd" style="left:1501.8px;top:734.7px;width:27.4px;height:15.7px;"></div>
<div class="t" style="left:1438.7px;top:726.0px;font-size:19.5px;letter-spacing:1.17px;">8</div>
<div style="left:1511.0px;top:724.0px;width:0;height:0;border-left:4.5px solid transparent;border-right:4.5px solid transparent;border-bottom:4.5px solid #4a4a4a"></div>
<div style="left:1511.0px;top:740.3px;width:0;height:0;border-left:4.5px solid transparent;border-right:4.5px solid transparent;border-top:4.5px solid #4a4a4a"></div>
<div class="btn" style="left:1633.8px;top:719.3px;width:28.0px;height:28.0px;"></div>
<div class="t" style="left:1497.8px;width:300px;text-align:center;top:726.0px;font-size:14.5px;">c</div>
<div class="t" style="right:498.8px;top:760.0px;font-size:18.0px;">DynLevel</div>
<div class="btn" style="left:1427.7px;top:751.3px;width:200.8px;height:33.2px;"></div>
<div class="t" style="left:1439.2px;top:759.0px;font-size:19.5px;">12</div>
<div style="left:1605.4px;top:765.4px;width:0;height:0;border-left:5.5px solid transparent;border-right:5.5px solid transparent;border-top:6.0px solid #4d4d4d"></div>
<div class="btn" style="left:1633.8px;top:753.1px;width:28.0px;height:28.0px;"></div>
<div class="t" style="left:1497.8px;width:300px;text-align:center;top:760.0px;font-size:14.5px;">c</div>
<div class="t" style="right:498.8px;top:794.0px;font-size:18.0px;">DynTime</div>
<div class="btn" style="left:1427.7px;top:785.1px;width:200.8px;height:33.2px;"></div>
<div class="t" style="left:1439.2px;top:793.0px;font-size:19.5px;">24</div>
<div style="left:1605.4px;top:799.2px;width:0;height:0;border-left:5.5px solid transparent;border-right:5.5px solid transparent;border-top:6.0px solid #4d4d4d"></div>
<div class="btn" style="left:1633.8px;top:786.9px;width:28.0px;height:28.0px;"></div>
<div class="t" style="left:1497.8px;width:300px;text-align:center;top:794.0px;font-size:14.5px;">c</div>
<div class="t" style="right:498.8px;top:827.0px;font-size:18.0px;">MinScan</div>
<div class="fld" style="left:1427.7px;top:819.2px;width:75.1px;height:32.6px;"></div>
<div class="sbu" style="left:1501.8px;top:819.2px;width:27.4px;height:16.1px;"></div>
<div class="sbd" style="left:1501.8px;top:836.1px;width:27.4px;height:15.7px;"></div>
<div class="t" style="left:1438.7px;top:827.0px;font-size:19.5px;letter-spacing:1.17px;">20</div>
<div style="left:1511.0px;top:825.4px;width:0;height:0;border-left:4.5px solid transparent;border-right:4.5px solid transparent;border-bottom:4.5px solid #4a4a4a"></div>
<div style="left:1511.0px;top:841.7px;width:0;height:0;border-left:4.5px solid transparent;border-right:4.5px solid transparent;border-top:4.5px solid #4a4a4a"></div>
<div class="btn" style="left:1633.8px;top:820.7px;width:28.0px;height:28.0px;"></div>
<div class="t" style="left:1497.8px;width:300px;text-align:center;top:828.0px;font-size:14.5px;">c</div>
<div class="t" style="right:498.8px;top:861.0px;font-size:18.0px;">Pos Level</div>
<div class="btn" style="left:1427.7px;top:852.7px;width:200.8px;height:33.2px;"></div>
<div class="t" style="left:1439.7px;top:861.0px;font-size:18.4px;">Disabled</div>
<div style="left:1605.4px;top:866.8px;width:0;height:0;border-left:5.5px solid transparent;border-right:5.5px solid transparent;border-top:6.0px solid #4d4d4d"></div>
<div class="btn" style="left:1633.8px;top:854.5px;width:28.0px;height:28.0px;"></div>
<div class="t" style="left:1497.8px;width:300px;text-align:center;top:862.0px;font-size:14.5px;">c</div>
<div class="t" style="right:498.8px;top:895.0px;font-size:18.0px;">Pos Low</div>
<div class="fld" style="left:1427.7px;top:886.8px;width:75.1px;height:32.6px;"></div>
<div class="sbu" style="left:1501.8px;top:886.8px;width:27.4px;height:16.1px;"></div>
<div class="sbd" style="left:1501.8px;top:903.7px;width:27.4px;height:15.7px;"></div>
<div class="t" style="left:1438.7px;top:895.0px;font-size:19.5px;letter-spacing:1.17px;">5</div>
<div style="left:1511.0px;top:893.0px;width:0;height:0;border-left:4.5px solid transparent;border-right:4.5px solid transparent;border-bottom:4.5px solid #4a4a4a"></div>
<div style="left:1511.0px;top:909.3px;width:0;height:0;border-left:4.5px solid transparent;border-right:4.5px solid transparent;border-top:4.5px solid #4a4a4a"></div>
<div class="btn" style="left:1633.8px;top:888.3px;width:28.0px;height:28.0px;"></div>
<div class="t" style="left:1497.8px;width:300px;text-align:center;top:895.0px;font-size:14.5px;">c</div>
<div class="t" style="right:498.8px;top:929.0px;font-size:18.0px;">Pos High</div>
<div class="fld" style="left:1427.7px;top:920.6px;width:75.1px;height:32.6px;"></div>
<div class="sbu" style="left:1501.8px;top:920.6px;width:27.4px;height:16.1px;"></div>
<div class="sbd" style="left:1501.8px;top:937.5px;width:27.4px;height:15.7px;"></div>
<div class="t" style="left:1438.7px;top:928.0px;font-size:19.5px;letter-spacing:1.17px;">15</div>
<div style="left:1511.0px;top:926.8px;width:0;height:0;border-left:4.5px solid transparent;border-right:4.5px solid transparent;border-bottom:4.5px solid #4a4a4a"></div>
<div style="left:1511.0px;top:943.1px;width:0;height:0;border-left:4.5px solid transparent;border-right:4.5px solid transparent;border-top:4.5px solid #4a4a4a"></div>
<div class="btn" style="left:1633.8px;top:922.1px;width:28.0px;height:28.0px;"></div>
<div class="t" style="left:1497.8px;width:300px;text-align:center;top:929.0px;font-size:14.5px;">c</div>
<div class="t" style="right:498.8px;top:963.0px;font-size:18.0px;">Type</div>
<div class="btn" style="left:1427.7px;top:954.1px;width:200.8px;height:33.2px;"></div>
<div class="t" style="left:1439.7px;top:963.0px;font-size:18.4px;">Piezo</div>
<div style="left:1605.4px;top:968.2px;width:0;height:0;border-left:5.5px solid transparent;border-right:5.5px solid transparent;border-top:6.0px solid #4d4d4d"></div>
<div class="btn" style="left:1633.8px;top:955.9px;width:28.0px;height:28.0px;"></div>
<div class="t" style="left:1497.8px;width:300px;text-align:center;top:963.0px;font-size:14.5px;">c</div>
<div style="left:865.0px;top:992.5px;width:815.0px;height:32.9px;background:#d3d3d3"></div>
<div class="t" style="left:1171.4px;width:200px;text-align:center;top:1001.0px;font-size:18.2px;">3rd Zone</div>
<div class="t" style="right:907.4px;top:1042.0px;font-size:18.0px;">Disabled</div>
<div class="chk" style="left:1018.7px;top:1039.2px;width:22.3px;height:21.5px;"></div>
<div class="t" style="right:907.4px;top:1076.0px;font-size:18.0px;">Note</div>
<div class="fld" style="left:1019.0px;top:1067.2px;width:64.5px;height:32.8px;"></div>
<div class="sbu" style="left:1082.5px;top:1067.2px;width:27.2px;height:16.2px;"></div>
<div class="sbd" style="left:1082.5px;top:1084.2px;width:27.2px;height:15.8px;"></div>
<div class="t" style="left:1031.5px;top:1075.0px;font-size:19.5px;letter-spacing:1.17px;">0</div>
<div style="left:1091.6px;top:1073.4px;width:0;height:0;border-left:4.5px solid transparent;border-right:4.5px solid transparent;border-bottom:4.5px solid #4a4a4a"></div>
<div style="left:1091.6px;top:1089.8px;width:0;height:0;border-left:4.5px solid transparent;border-right:4.5px solid transparent;border-top:4.5px solid #4a4a4a"></div>
<div class="t" style="left:1150.7px;top:1075.0px;font-size:19.2px;">C</div>
<div class="t" style="right:726.8px;top:1075.0px;font-size:19.2px;">-3</div>
<div class="btn" style="left:1225.4px;top:1070.0px;width:28.1px;height:27.2px;"></div>
<div class="t" style="left:1089.5px;width:300px;text-align:center;top:1077.0px;font-size:14.5px;">c</div>
<div class="t" style="right:907.4px;top:1110.0px;font-size:18.0px;">AltNote</div>
<div class="fld" style="left:1019.0px;top:1101.3px;width:64.5px;height:32.8px;"></div>
<div class="sbu" style="left:1082.5px;top:1101.3px;width:27.2px;height:16.2px;"></div>
<div class="sbd" style="left:1082.5px;top:1118.3px;width:27.2px;height:15.8px;"></div>
<div class="t" style="left:1031.5px;top:1109.0px;font-size:19.5px;letter-spacing:1.17px;">0</div>
<div style="left:1091.6px;top:1107.5px;width:0;height:0;border-left:4.5px solid transparent;border-right:4.5px solid transparent;border-bottom:4.5px solid #4a4a4a"></div>
<div style="left:1091.6px;top:1124.0px;width:0;height:0;border-left:4.5px solid transparent;border-right:4.5px solid transparent;border-top:4.5px solid #4a4a4a"></div>
<div class="t" style="left:1150.7px;top:1109.0px;font-size:19.2px;">C</div>
<div class="t" style="right:726.8px;top:1109.0px;font-size:19.2px;">-3</div>
<div class="chk" style="left:1201.5px;top:1109.9px;width:16.5px;height:15.6px;"></div>
<div class="btn" style="left:1225.4px;top:1104.1px;width:28.1px;height:27.2px;"></div>
<div class="t" style="left:1089.5px;width:300px;text-align:center;top:1111.0px;font-size:14.5px;">c</div>
<div class="t" style="right:907.4px;top:1144.0px;font-size:18.0px;">PressrollNote</div>
<div class="fld" style="left:1019.0px;top:1135.2px;width:64.5px;height:32.8px;"></div>
<div class="sbu" style="left:1082.5px;top:1135.2px;width:27.2px;height:16.2px;"></div>
<div class="sbd" style="left:1082.5px;top:1152.2px;width:27.2px;height:15.8px;"></div>
<div class="t" style="left:1031.5px;top:1143.0px;font-size:19.5px;letter-spacing:1.17px;">0</div>
<div style="left:1091.6px;top:1141.4px;width:0;height:0;border-left:4.5px solid transparent;border-right:4.5px solid transparent;border-bottom:4.5px solid #4a4a4a"></div>
<div style="left:1091.6px;top:1157.8px;width:0;height:0;border-left:4.5px solid transparent;border-right:4.5px solid transparent;border-top:4.5px solid #4a4a4a"></div>
<div class="t" style="left:1150.7px;top:1143.0px;font-size:19.2px;">C</div>
<div class="t" style="right:726.8px;top:1143.0px;font-size:19.2px;">-3</div>
<div class="chk" style="left:1201.5px;top:1143.8px;width:16.5px;height:15.6px;"></div>
<div class="btn" style="left:1225.4px;top:1138.0px;width:28.1px;height:27.2px;"></div>
<div class="t" style="left:1089.5px;width:300px;text-align:center;top:1145.0px;font-size:14.5px;">c</div>
<div class="t" style="right:491.4px;top:1041.0px;font-size:18.0px;">Midpoint</div>
<div style="left:1437.4px;top:1040.0px;width:187.0px;height:6.5px;background:linear-gradient(#e2e2e2,#f4f4f4);border:1px solid #c8c8c8;border-radius:4px"></div>
<div style="left:1445.0px;top:1051.0px;width:1.0px;height:7.0px;background:#aaa"></div>
<div style="left:1456.1px;top:1051.0px;width:1.0px;height:4.0px;background:#aaa"></div>
<div style="left:1467.2px;top:1051.0px;width:1.0px;height:4.0px;background:#aaa"></div>
<div style="left:1478.4px;top:1051.0px;width:1.0px;height:4.0px;background:#aaa"></div>
<div style="left:1489.5px;top:1051.0px;width:1.0px;height:4.0px;background:#aaa"></div>
<div style="left:1500.6px;top:1051.0px;width:1.0px;height:4.0px;background:#aaa"></div>
<div style="left:1511.8px;top:1051.0px;width:1.0px;height:4.0px;background:#aaa"></div>
<div style="left:1522.9px;top:1051.0px;width:1.0px;height:4.0px;background:#aaa"></div>
<div style="left:1534.0px;top:1051.0px;width:1.0px;height:4.0px;background:#aaa"></div>
<div style="left:1545.1px;top:1051.0px;width:1.0px;height:4.0px;background:#aaa"></div>
<div style="left:1556.2px;top:1051.0px;width:1.0px;height:4.0px;background:#aaa"></div>
<div style="left:1567.4px;top:1051.0px;width:1.0px;height:4.0px;background:#aaa"></div>
<div style="left:1578.5px;top:1051.0px;width:1.0px;height:4.0px;background:#aaa"></div>
<div style="left:1589.6px;top:1051.0px;width:1.0px;height:4.0px;background:#aaa"></div>
<div style="left:1600.8px;top:1051.0px;width:1.0px;height:4.0px;background:#aaa"></div>
<div style="left:1611.9px;top:1051.0px;width:1.0px;height:4.0px;background:#aaa"></div>
<div style="left:1623.0px;top:1051.0px;width:1.0px;height:7.0px;background:#aaa"></div>
<div style="left:1437.4px;top:1036.2px;width:14px;height:14px;border-radius:50%;border:1px solid #b8b8b8;background:linear-gradient(#fafafa,#e2e2e2)"></div>
<div class="btn" style="left:1643.4px;top:1036.0px;width:27.4px;height:26.6px;"></div>
<div class="t" style="left:1507.1px;width:300px;text-align:center;top:1042.0px;font-size:14.5px;">c</div>
<div class="t" style="right:491.4px;top:1075.0px;font-size:18.0px;color:#a8a8a8;">Threshold</div>
<div class="fld" style="left:1437.4px;top:1067.0px;width:74.2px;height:32.8px;opacity:.45;"></div>
<div class="sbu" style="left:1510.6px;top:1067.0px;width:27.8px;height:16.2px;opacity:.45;"></div>
<div class="sbd" style="left:1510.6px;top:1084.0px;width:27.8px;height:15.8px;opacity:.45;"></div>
<div class="t" style="left:1449.4px;top:1075.0px;font-size:19.5px;color:#aaa;letter-spacing:1.17px;">0</div>
<div style="left:1520.0px;top:1073.2px;width:0;height:0;border-left:4.5px solid transparent;border-right:4.5px solid transparent;border-bottom:4.5px solid #999"></div>
<div style="left:1520.0px;top:1089.6px;width:0;height:0;border-left:4.5px solid transparent;border-right:4.5px solid transparent;border-top:4.5px solid #999"></div>
<div class="btn" style="left:1643.4px;top:1069.9px;width:27.4px;height:26.9px;opacity:.45"></div>
<div class="t" style="left:1642.1px;width:30px;text-align:center;top:1075.0px;font-size:14.5px;color:#999;">c</div>
<div class="t" style="right:491.4px;top:1109.0px;font-size:18.0px;">MidpointWidth</div>
<div class="fld" style="left:1437.4px;top:1101.1px;width:74.2px;height:32.9px;"></div>
<div class="sbu" style="left:1510.6px;top:1101.1px;width:27.8px;height:16.2px;"></div>
<div class="sbd" style="left:1510.6px;top:1118.1px;width:27.8px;height:15.9px;"></div>
<div class="t" style="left:1449.4px;top:1109.0px;font-size:19.5px;letter-spacing:1.17px;">0</div>
<div style="left:1520.0px;top:1107.4px;width:0;height:0;border-left:4.5px solid transparent;border-right:4.5px solid transparent;border-bottom:4.5px solid #4a4a4a"></div>
<div style="left:1520.0px;top:1123.8px;width:0;height:0;border-left:4.5px solid transparent;border-right:4.5px solid transparent;border-top:4.5px solid #4a4a4a"></div>
<div class="btn" style="left:1643.4px;top:1104.0px;width:27.4px;height:27.0px;"></div>
<div class="t" style="left:1507.1px;width:300px;text-align:center;top:1111.0px;font-size:14.5px;">c</div>
<div class="t" style="right:491.4px;top:1143.0px;font-size:18.0px;">DampenedNote</div>
<div class="fld" style="left:1437.4px;top:1134.8px;width:63.3px;height:32.8px;"></div>
<div class="sbu" style="left:1499.7px;top:1134.8px;width:27.8px;height:16.2px;"></div>
<div class="sbd" style="left:1499.7px;top:1151.8px;width:27.8px;height:15.8px;"></div>
<div class="t" style="left:1449.4px;top:1143.0px;font-size:19.5px;letter-spacing:1.17px;">26</div>
<div style="left:1509.1px;top:1141.0px;width:0;height:0;border-left:4.5px solid transparent;border-right:4.5px solid transparent;border-bottom:4.5px solid #4a4a4a"></div>
<div style="left:1509.1px;top:1157.4px;width:0;height:0;border-left:4.5px solid transparent;border-right:4.5px solid transparent;border-top:4.5px solid #4a4a4a"></div>
<div class="t" style="left:1570.8px;top:1142.0px;font-size:19.2px;">D</div>
<div class="t" style="right:309.8px;top:1142.0px;font-size:19.2px;">-1</div>
<div class="btn" style="left:1643.4px;top:1138.0px;width:27.4px;height:27.0px;"></div>
<div class="t" style="left:1507.1px;width:300px;text-align:center;top:1145.0px;font-size:14.5px;">c</div>
<div style="left:265.5px;top:250.8px;width:499.4px;height:877.4000000000001px;background:#f4f4f4;border-radius:5px 5px 0 0;box-shadow:0 10px 30px rgba(0,0,0,.45);border:1px solid #b0b0b0"></div>
<div style="left:266.5px;top:251.8px;width:497.4px;height:25.2px;background:linear-gradient(#ebebeb,#d5d5d5);border-bottom:1px solid #c2c2c2;border-radius:5px 5px 0 0"></div>
<div style="left:276.0px;top:256.8px;width:14.0px;height:14.0px;border-radius:50%;background:#fc605c;border:0.8px solid #de4a46"></div>
<div style="left:299.6px;top:256.8px;width:14.0px;height:14.0px;border-radius:50%;background:#fdbc40;border:0.8px solid #dea236"></div>
<div style="left:323.4px;top:256.8px;width:14.0px;height:14.0px;border-radius:50%;background:#34c84a;border:0.8px solid #27aa35"></div>
<svg style="position:absolute;left:423.9px;top:256.0px" width="20.0" height="16.0" viewBox="0 0 20 16"><rect x="0" y="6.2" width="5.6" height="1.5" rx=".7" fill="#3a4a48"/><rect x="1.5" y="4.2" width="3" height=".6" fill="#bbb"/><rect x="1.8" y="8.4" width="4.5" height="1.2" fill="#e89a9a"/><path d="M4.6 8.6 L6.4 1.2 L7.9 14.6 L9 4.2 L10.3 9.8 L11 9" fill="none" stroke="#e0505a" stroke-width="1.05" stroke-linejoin="round"/><rect x="11.6" y="4.3" width="3.4" height="4" fill="none" stroke="#6a6a6a" stroke-width="1.5"/><rect x="15" y="1.5" width="1.8" height="7.6" fill="#5e5e5e"/><rect x="10.6" y="9.6" width="8.8" height="1.3" fill="#a8a8a8"/><rect x="10.6" y="12" width="8.8" height="1.2" fill="#f7c0c4"/></svg>
<div class="t" style="left:448.2px;top:258.0px;font-size:15.8px;color:#4d4d4d;">MDM FX: HiHat Pedal</div>
<div class="btn" style="left:269.5px;top:277.9px;width:49.5px;height:29.3px;"></div>
<div class="t" style="left:144.2px;width:300px;text-align:center;top:286.0px;font-size:17.6px;">Get</div>
<div class="btn" style="left:321.0px;top:277.9px;width:61.4px;height:29.3px;"></div>
<div class="t" style="left:201.7px;width:300px;text-align:center;top:286.0px;font-size:17.6px;">Send</div>
<div style="left:385.5px;top:277.9px;width:2px;height:29.30000000000001px;border-left:1px solid #d0d0d0;border-right:1px solid #fafafa"></div>
<div class="btn" style="left:390.5px;top:277.9px;width:61.3px;height:29.3px;"></div>
<div class="t" style="left:271.1px;width:300px;text-align:center;top:286.0px;font-size:17.6px;">Load</div>
<div class="btn" style="left:452.8px;top:277.9px;width:60.4px;height:29.3px;"></div>
<div class="t" style="left:333.0px;width:300px;text-align:center;top:286.0px;font-size:17.6px;">Save</div>
<div style="left:266.5px;top:309.0px;width:497.4px;height:32.0px;background:#d3d3d3;border-bottom:1px solid #c4c4c4"></div>
<div style="left:274.9px;top:309.9px;width:56.9px;height:32.1px;background:#f4f4f4;border:1.5px solid #3d9bdc;border-bottom:none;border-radius:4px 4px 0 0;box-shadow:inset 1px 1px 0 #c9e3f4,inset -1px 0 0 #c9e3f4"></div>
<div class="t" style="left:253.3px;width:100px;text-align:center;top:317.0px;font-size:19.5px;">Misc</div>
<div style="left:334.5px;top:309.9px;width:73.1px;height:31.1px;border:1px solid #b8b8b8;border-bottom:none;border-radius:4px 4px 0 0;background:linear-gradient(#f2f2f2,#dedede)"></div>
<div class="t" style="left:321.1px;width:100px;text-align:center;top:317.0px;font-size:19.5px;">Levels</div>
<div style="left:409.5px;top:309.9px;width:69.9px;height:31.1px;border:1px solid #b8b8b8;border-bottom:none;border-radius:4px 4px 0 0;background:linear-gradient(#f2f2f2,#dedede)"></div>
<div class="t" style="left:394.4px;width:100px;text-align:center;top:317.0px;font-size:19.5px;">Notes</div>
<div style="left:266.5px;top:341.0px;width:497.4px;height:786.2px;background:#f4f4f4"></div>
<div class="t" style="right:1429.3px;top:353.0px;font-size:20.7px;">Type</div>
<div class="btn" style="left:497.0px;top:342.4px;width:248.4px;height:38.4px;"></div>
<div class="t" style="left:508.6px;top:355.0px;font-size:17.5px;">FootContr</div>
<div style="left:722.3px;top:359.1px;width:0;height:0;border-left:5.5px solid transparent;border-right:5.5px solid transparent;border-top:6.0px solid #4d4d4d"></div>
<div class="t" style="right:1429.3px;top:392.0px;font-size:20.7px;">Curve</div>
<div class="btn" style="left:497.0px;top:382.2px;width:248.4px;height:38.8px;"></div>
<div class="t" style="left:508.6px;top:395.0px;font-size:17.5px;">LinearCustom1</div>
<div style="left:722.3px;top:399.1px;width:0;height:0;border-left:5.5px solid transparent;border-right:5.5px solid transparent;border-top:6.0px solid #4d4d4d"></div>
<div class="t" style="right:1429.3px;top:431.0px;font-size:20.7px;">Chick Curve</div>
<div class="btn" style="left:497.0px;top:422.0px;width:248.4px;height:37.4px;"></div>
<div class="t" style="left:508.6px;top:434.0px;font-size:17.5px;">LinearCustom1</div>
<div style="left:722.3px;top:438.2px;width:0;height:0;border-left:5.5px solid transparent;border-right:5.5px solid transparent;border-top:6.0px solid #4d4d4d"></div>
<div class="t" style="right:1429.3px;top:471.0px;font-size:20.7px;">HiHat Input</div>
<div class="btn" style="left:497.0px;top:460.7px;width:248.4px;height:39.3px;"></div>
<div class="t" style="left:511.9px;top:470.0px;font-size:21px;">2</div>
<div style="left:717.5px;top:477.4px;width:0;height:0;border-left:6.5px solid transparent;border-right:6.5px solid transparent;border-top:7.0px solid #4d4d4d"></div>
<div class="t" style="right:1429.3px;top:510.0px;font-size:20.7px;">Alt Input</div>
<div class="chk" style="left:496.9px;top:507.0px;width:25.6px;height:25.6px;"></div>
<div class="t" style="right:1429.3px;top:550.0px;font-size:20.7px;">Reverse Levels</div>
<div class="chk" style="left:496.9px;top:546.4px;width:25.6px;height:25.6px;"></div>
<div class="t" style="right:1429.3px;top:589.0px;font-size:20.7px;">Soft Chicks</div>
<div class="chk" style="left:496.9px;top:585.8px;width:25.6px;height:25.6px;"></div>
<div class="t" style="right:1429.3px;top:629.0px;font-size:20.7px;">Auto Levels</div>
<div class="chk" style="left:496.9px;top:625.4px;width:25.6px;height:25.6px;"></div>
<svg style="position:absolute;left:496.9px;top:625.4px" width="25.6" height="25.6" viewBox="0 0 24 24"><path d="M5 12.5 L10 19 L20 4" fill="none" stroke="#333" stroke-width="2.4" stroke-linejoin="miter"/></svg>
<div class="t" style="right:1429.3px;top:668.0px;font-size:20.7px;">New Algorithm</div>
<div class="chk" style="left:496.9px;top:665.0px;width:25.6px;height:25.6px;"></div>
<div class="t" style="right:1429.3px;top:708.0px;font-size:20.7px;">Chick Delay</div>
<div class="fld" style="left:497.0px;top:697.3px;width:88.1px;height:39.6px;"></div>
<div class="sbu" style="left:584.1px;top:697.3px;width:31.3px;height:19.6px;"></div>
<div class="sbd" style="left:584.1px;top:717.7px;width:31.3px;height:19.2px;"></div>
<div class="t" style="left:511.7px;top:708.0px;font-size:21.5px;letter-spacing:1.29px;">0</div>
<div style="left:594.8px;top:704.8px;width:0;height:0;border-left:5.0px solid transparent;border-right:5.0px solid transparent;border-bottom:5.4px solid #4a4a4a"></div>
<div style="left:594.8px;top:724.6px;width:0;height:0;border-left:5.0px solid transparent;border-right:5.0px solid transparent;border-top:5.4px solid #4a4a4a"></div>
<div class="t" style="right:1429.3px;top:747.0px;font-size:20.7px;">CC Number</div>
<div class="fld" style="left:497.0px;top:736.9px;width:88.1px;height:39.1px;"></div>
<div class="sbu" style="left:584.1px;top:736.9px;width:31.3px;height:19.4px;"></div>
<div class="sbd" style="left:584.1px;top:757.1px;width:31.3px;height:18.9px;"></div>
<div class="t" style="left:511.7px;top:748.0px;font-size:21.5px;letter-spacing:1.29px;">4</div>
<div style="left:594.8px;top:744.3px;width:0;height:0;border-left:5.0px solid transparent;border-right:5.0px solid transparent;border-bottom:5.4px solid #4a4a4a"></div>
<div style="left:594.8px;top:763.8px;width:0;height:0;border-left:5.0px solid transparent;border-right:5.0px solid transparent;border-top:5.4px solid #4a4a4a"></div>
<div class="t" style="right:1429.3px;top:786.0px;font-size:20.7px;">CC Reduction Lvl</div>
<div class="fld" style="left:497.0px;top:776.0px;width:88.1px;height:39.8px;"></div>
<div class="sbu" style="left:584.1px;top:776.0px;width:31.3px;height:19.7px;"></div>
<div class="sbd" style="left:584.1px;top:796.5px;width:31.3px;height:19.3px;"></div>
<div class="t" style="left:511.7px;top:787.0px;font-size:21.5px;letter-spacing:1.29px;">1</div>
<div style="left:594.8px;top:783.5px;width:0;height:0;border-left:5.0px solid transparent;border-right:5.0px solid transparent;border-bottom:5.4px solid #4a4a4a"></div>
<div style="left:594.8px;top:803.4px;width:0;height:0;border-left:5.0px solid transparent;border-right:5.0px solid transparent;border-top:5.4px solid #4a4a4a"></div>
</body></html>
